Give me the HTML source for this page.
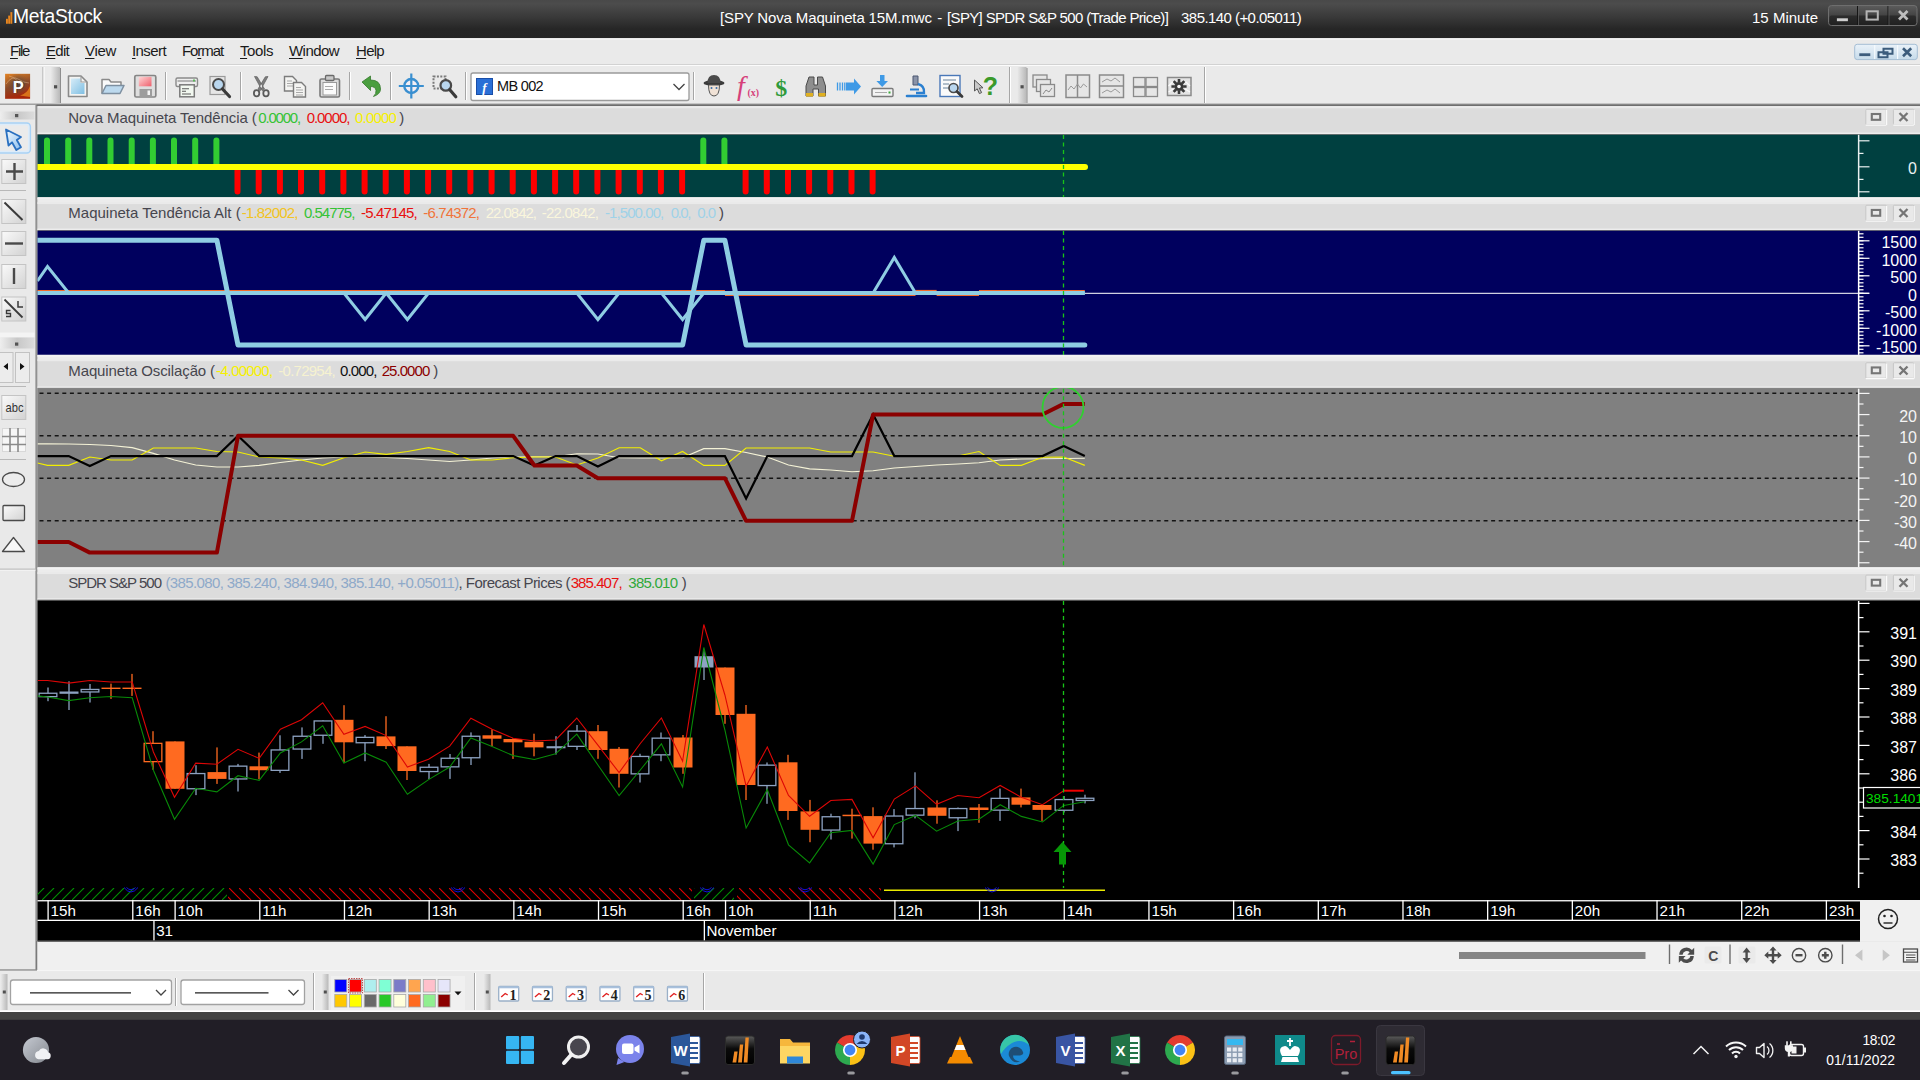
<!DOCTYPE html><html><head><meta charset="utf-8"><title>MetaStock</title><style>
html,body{margin:0;padding:0;background:#eaeaea;}
body{width:1920px;height:1080px;overflow:hidden;font-family:"Liberation Sans",sans-serif;}
#root{position:relative;width:1920px;height:1080px;overflow:hidden;background:#eaeaea;}
#gfx{position:absolute;left:0;top:0;}
.t{position:absolute;white-space:pre;line-height:1.2;font-family:"Liberation Sans",sans-serif;}
.t u{text-decoration:underline;text-underline-offset:2px;}
svg text{font-family:"Liberation Sans",sans-serif;}

</style></head><body>
<div id="root">
<svg id="gfx" width="1920" height="1080" viewBox="0 0 1920 1080">
<defs>
<clipPath id="cpC"><rect x="37.5" y="100" width="1890" height="850"/></clipPath>
<linearGradient id="gTitle" x1="0" y1="0" x2="0" y2="1">
 <stop offset="0" stop-color="#494949"/><stop offset="0.1" stop-color="#4c4c4c"/>
 <stop offset="0.45" stop-color="#393939"/><stop offset="0.76" stop-color="#262626"/><stop offset="1" stop-color="#252525"/>
</linearGradient>
<linearGradient id="gBtn" x1="0" y1="0" x2="1" y2="1">
 <stop offset="0" stop-color="#fafafa"/><stop offset="1" stop-color="#d2d2d2"/>
</linearGradient>
<linearGradient id="gGrip" x1="0" y1="0" x2="1" y2="0">
 <stop offset="0" stop-color="#e8e8e8"/><stop offset="1" stop-color="#b8b8b8"/>
</linearGradient>
<linearGradient id="gGripH" x1="0" y1="0" x2="1" y2="0">
 <stop offset="0" stop-color="#eeeeee"/><stop offset="0.5" stop-color="#c8c8c8"/><stop offset="1" stop-color="#dcdcdc"/>
</linearGradient>
<linearGradient id="gCap" x1="0" y1="0" x2="0" y2="1">
 <stop offset="0" stop-color="#5c5c5c"/><stop offset="1" stop-color="#2a2a2a"/>
</linearGradient>
<linearGradient id="gMs" x1="0" y1="0" x2="0" y2="1"><stop offset="0" stop-color="#5a5a5a"/><stop offset="0.45" stop-color="#0a0a0a"/><stop offset="1" stop-color="#000"/></linearGradient>
<linearGradient id="gP" x1="0" y1="0" x2="1" y2="1">
 <stop offset="0" stop-color="#d9762a"/><stop offset="0.5" stop-color="#8a3a18"/><stop offset="1" stop-color="#c2481c"/>
</linearGradient>
<linearGradient id="gDoc" x1="0" y1="0" x2="1" y2="1">
 <stop offset="0" stop-color="#d6ecf8"/><stop offset="1" stop-color="#7fbfe3"/>
</linearGradient>
<pattern id="hG" width="10" height="12" patternUnits="userSpaceOnUse" x="32" y="888">
 <path d="M0,12 L12,0 M-10,12 L2,0" stroke="#009000" stroke-width="1.2" fill="none"/>
</pattern>
<pattern id="hR" width="10" height="12" patternUnits="userSpaceOnUse" x="229" y="888">
 <path d="M0,0 L12,12 M-10,0 L2,12" stroke="#e00000" stroke-width="1.2" fill="none"/>
</pattern>
</defs>
<rect x="0" y="0" width="1920" height="38.2" fill="url(#gTitle)" />
<rect x="6" y="18.8" width="1.9" height="4.95" fill="#e8861f" />
<rect x="8.2" y="15.6" width="1.9" height="8.15" fill="#e8861f" />
<rect x="10.4" y="12.1" width="1.9" height="11.65" fill="#e8861f" />
<rect x="1828.5" y="5.500" width="88.500" height="20" rx="3" fill="url(#gCap)" stroke="#6e6e6e" stroke-width="1"/>
<rect x="1829.5" y="15.500" width="86.500" height="9.500" rx="2" fill="#1a1a1a" opacity=".55"/>
<path d="M1857.500,6 v19 M1888,6 v19" stroke="#161616" stroke-width="1"/><path d="M1858.500,6 v19 M1889,6 v19" stroke="#5a5a5a" stroke-width="0.800"/>
<rect x="1836.9" y="18.3" width="11" height="2.9" fill="#cfcfcf" />
<rect x="1866.600" y="11.300" width="11.200" height="8.300" fill="none" stroke="#b4b4b4" stroke-width="2"/>
<path d="M1899,11 l8.500,8.500 M1907.500,11 l-8.500,8.500" stroke="#bdbdbd" stroke-width="2.800" fill="none"/>
<rect x="0" y="38.2" width="1920" height="1.6" fill="#f6f6f6" />
<rect x="0" y="39.8" width="1920" height="25" fill="#eaeaea" />
<linearGradient id="gMdi" x1="0" y1="0" x2="0" y2="1"><stop offset="0" stop-color="#eaf2f9"/><stop offset="1" stop-color="#c6dbea"/></linearGradient>
<rect x="1854.700" y="44.300" width="62.600" height="15.300" rx="2.500" fill="url(#gMdi)" stroke="#a4bdd4" stroke-width="1"/>
<path d="M1874.700,45 v14 M1897.600,45 v14" stroke="#f6fafd" stroke-width="1.200"/>
<rect x="1859.3" y="53.3" width="11" height="2.8" fill="#3c5c7c" />
<path d="M1883.500,48.800 h9 v5 h-9z M1878.500,52.300 h9 v5 h-9z" fill="#d6e6f2" stroke="#3c5c7c" stroke-width="2"/>
<path d="M1903,48.200 l8.200,8 M1911.200,48.200 l-8.200,8" stroke="#3c5c7c" stroke-width="2.600"/>
<rect x="0" y="105" width="36" height="865" fill="#e9e9e9" />
<rect x="35.5" y="105" width="2" height="865" fill="#7a7a7a" />
<rect x="36.5" y="105" width="1" height="836" fill="#a8a8a8" />
<rect x="0" y="568.7" width="35.5" height="1" fill="#a8a8a8" />
<rect x="0" y="569.7" width="35.5" height="1" fill="#f6f6f6" />
<rect x="0" y="111.5" width="34.5" height="8" fill="url(#gGripH)" />
<rect x="15" y="114" width="3.3" height="3.2" fill="#555" />
<rect x="0" y="332.5" width="34.5" height="5" fill="#f4f4f4" />
<rect x="0" y="337.5" width="34.5" height="11" fill="url(#gGripH)" />
<rect x="15" y="342.5" width="3.3" height="3.2" fill="#555" />
<rect x="-3" y="123" width="33.300" height="30" rx="3.500" fill="#ebebeb" stroke="#a6d2f7" stroke-width="1.600"/>
<rect x="-3" y="124.600" width="31.700" height="26.800" rx="2.500" fill="none" stroke="#dcecfa" stroke-width="1.400"/>
<linearGradient id="gPtr" x1="0" y1="0" x2="1" y2="1"><stop offset="0" stop-color="#f4faff"/><stop offset="1" stop-color="#8ec0ee"/></linearGradient>
<path d="M6,129.500 L8.500,145.500 L12,142.300 L16.300,150 L21,147.300 L16.800,140 L21,137 Z" fill="url(#gPtr)" stroke="#2a70c0" stroke-width="1.800" stroke-linejoin="round"/>
<rect x="1.8" y="159.5" width="24" height="24" fill="url(#gBtn)" stroke="#c4c4c4" stroke-width="1"/>
<path d="M6,171.500 h17 M14.500,163 v17" stroke="#4a4a4a" stroke-width="2.4"/>
<rect x="0" y="190" width="26" height="1" fill="#b8b8b8" />
<rect x="1.8" y="199.5" width="24" height="24" fill="url(#gBtn)" stroke="#c4c4c4" stroke-width="1"/>
<path d="M4.500,202.500 L22.500,220" stroke="#3a3a3a" stroke-width="2"/>
<rect x="1.8" y="231.5" width="24" height="24" fill="url(#gBtn)" stroke="#c4c4c4" stroke-width="1"/>
<path d="M5,243.500 h18" stroke="#4a4a4a" stroke-width="2.4"/>
<rect x="1.8" y="264.5" width="24" height="24" fill="url(#gBtn)" stroke="#c4c4c4" stroke-width="1"/>
<path d="M14,268 v16" stroke="#4a4a4a" stroke-width="2.4"/>
<rect x="1.8" y="297" width="24" height="24" fill="url(#gBtn)" stroke="#c4c4c4" stroke-width="1"/>
<path d="M4.5,299.5 L22.5,317.5" stroke="#3a3a3a" stroke-width="1.8"/>
<path d="M18,301 v6 h5" stroke="#3a3a3a" stroke-width="1.5" fill="none"/>
<path d="M10.500,310.500 h-4 v3 h4 v3 h-4.500" stroke="#3a3a3a" stroke-width="1.4" fill="none"/>
<rect x="-1" y="352.500" width="14" height="30" fill="#ececec" stroke="#c2c2c2"/>
<rect x="15.500" y="352.500" width="14" height="30" fill="#ececec" stroke="#c2c2c2"/>
<path d="M8,363 v7 l-4.500,-3.500z M20,363 v7 l4.500,-3.500z" fill="#111"/>
<rect x="0" y="386" width="26" height="1" fill="#b8b8b8" />
<rect x="1.8" y="395.5" width="24" height="24" fill="url(#gBtn)" stroke="#c4c4c4" stroke-width="1"/>
<text x="14.500" y="412" font-size="13.5" text-anchor="middle" fill="#333" textLength="18" lengthAdjust="spacingAndGlyphs">abc</text>
<rect x="2.500" y="428.500" width="23" height="23" fill="#f6f6f6" stroke="#d8d8d8"/>
<path d="M10,428 v24 M18,428 v24 M2,436.500 h24 M2,444.500 h24" stroke="#8a8a8a" stroke-width="1.6"/>
<rect x="0" y="459" width="26" height="1" fill="#b8b8b8" />
<ellipse cx="13.500" cy="479.500" rx="11" ry="7" fill="#ececec" stroke="#4a4a4a" stroke-width="1.3"/>
<rect x="3" y="505.500" width="21.500" height="15" rx="1" fill="url(#gBtn)" stroke="#4a4a4a" stroke-width="1.3"/>
<path d="M13.500,537.500 L24.500,551.500 H2.500 Z" fill="#f8f8f8" stroke="#4a4a4a" stroke-width="1.3" stroke-linejoin="round"/>
<rect x="0" y="64" width="1920" height="1" fill="#d2d2d2" />
<rect x="0" y="65" width="1920" height="1" fill="#fbfbfb" />
<rect x="0" y="66" width="1920" height="38" fill="#eaeaea" />
<rect x="0" y="103.5" width="1920" height="1.5" fill="#a0a0a0" />
<linearGradient id="gP2" x1="0" y1="0" x2="0.3" y2="1"><stop offset="0" stop-color="#e38324"/><stop offset="0.55" stop-color="#8a4a28"/><stop offset="1" stop-color="#a8260a"/></linearGradient>
<radialGradient id="gP3" cx="0.5" cy="0.42" r="0.45"><stop offset="0" stop-color="#4a4038" stop-opacity=".95"/><stop offset="1" stop-color="#6a5040" stop-opacity="0"/></radialGradient>
<rect x="5.100" y="73.800" width="25" height="25" fill="url(#gP2)"/>
<path d="M30,86 q-3,8 -10,9.500 l10,1.500z" fill="#e0801c" opacity=".85"/>
<rect x="5.100" y="73.800" width="25" height="25" fill="url(#gP3)"/>
<path d="M6,84 q6,-9 12,-5 t11,4 M9,76 q8,2 10,8" stroke="#f0c8a0" stroke-width="0.900" fill="none" opacity=".45"/>
<text x="19" y="93.200" font-size="16.500" font-weight="bold" fill="#2a2420" text-anchor="middle" opacity=".8">P</text>
<text x="18.200" y="92.800" font-size="16.500" font-weight="bold" fill="#fbfbfb" text-anchor="middle">P</text>
<rect x="42.5" y="67" width="1" height="36" fill="#a6a6a6" />
<rect x="43.5" y="67" width="1" height="36" fill="#ffffff" />
<rect x="51" y="67" width="9" height="36" fill="url(#gGrip)"/>
<rect x="54" y="85.2" width="3.2" height="3.2" fill="#505050" />
<rect x="60" y="68" width="1" height="35" fill="#8e8e8e" />
<path d="M68.500,76 h12.500 l6,6 v14.500 h-18.500z" fill="#f4f4f2" stroke="#8a8a8a" stroke-width="1.600" stroke-linejoin="round"/>
<path d="M71,78.500 h9.500 v4.500 h4 v11 h-13.500z" fill="url(#gDoc)"/>
<path d="M81,76.500 v5.500 h5.500" fill="none" stroke="#9a9a9a" stroke-width="1.100"/>
<path d="M102,93.500 v-14 h7 l2,2.500 h10 v4" fill="#fafafa" stroke="#8a8a8a" stroke-width="1.5" stroke-linejoin="round"/>
<path d="M102,93.500 l4,-8 h18 l-4,8z" fill="#bcd9ee" stroke="#7d8fa0" stroke-width="1.5" stroke-linejoin="round"/>
<rect x="134.800" y="75.500" width="21" height="21.500" rx="1.500" fill="#dedede" stroke="#868686" stroke-width="1.700"/>
<linearGradient id="gPink" x1="0" y1="0" x2="1" y2="1"><stop offset="0" stop-color="#ffd6d6"/><stop offset="1" stop-color="#ee5f6c"/></linearGradient>
<rect x="138.800" y="76.800" width="12.700" height="9.500" fill="url(#gPink)"/>
<rect x="139.500" y="89" width="12.500" height="7.200" fill="#9c9c9c"/><rect x="147.500" y="90.500" width="2.500" height="4.500" fill="#f4f4f4"/>
<rect x="165" y="72" width="1" height="28" fill="#a6a6a6" />
<rect x="166" y="72" width="1" height="28" fill="#ffffff" />
<rect x="176" y="78" width="21.500" height="8.500" rx="1.500" fill="#eeeeee" stroke="#8a8a8a" stroke-width="1.400"/>
<path d="M177.500,81 h18.500" stroke="#b4b4b4" stroke-width="2"/>
<rect x="179.800" y="84.800" width="14.500" height="12" fill="#f2f8f0" stroke="#7a7a7a" stroke-width="1.500"/>
<path d="M182,88.700 h7 M182,91.300 h4 M182,94 h9" stroke="#5a5a5a" stroke-width="1.100"/>
<rect x="193" y="79.5" width="2" height="2" fill="#5ab85a" />
<rect x="210" y="76.500" width="15" height="18" fill="#e6e6e6" stroke="#9a9a9a" stroke-width="1.2"/>
<circle cx="218.500" cy="84.500" r="5.500" fill="#b9d6ee" stroke="#4a4a4a" stroke-width="2"/>
<path d="M222.500,89 l7,7.500" stroke="#3a3a3a" stroke-width="3.200" stroke-linecap="round"/>
<rect x="240" y="72" width="1" height="28" fill="#a6a6a6" />
<rect x="241" y="72" width="1" height="28" fill="#ffffff" />
<path d="M254.500,76.500 l2.700,0.300 l7.300,12.200 l-2.200,1.800z M268,76.500 l-2.700,0.300 l-7.300,12.200 l2.200,1.800z" fill="#7e7e7e" stroke="#5e5e5e" stroke-width="0.700"/>
<ellipse cx="256.600" cy="93.200" rx="2.700" ry="3.100" fill="none" stroke="#5a5a5a" stroke-width="1.800"/><ellipse cx="266" cy="93.200" rx="2.700" ry="3.100" fill="none" stroke="#5a5a5a" stroke-width="1.800"/>
<path d="M284.500,76.500 h8 l4,4 v10.500 h-12z" fill="#f4f4f2" stroke="#7c7c7c" stroke-width="1.400"/>
<path d="M287,81 h5 M287,83.500 h7 M287,86 h7" stroke="#a8a8a8" stroke-width="1"/>
<path d="M293.500,82.500 h8 l4,4 v10.500 h-12z" fill="#f4f4f2" stroke="#7c7c7c" stroke-width="1.400"/>
<path d="M296,87.500 h5 M296,90 h7 M296,92.500 h7 M296,95 h7" stroke="#a8a8a8" stroke-width="1"/>
<rect x="320" y="79" width="19.500" height="18" rx="1.500" fill="#dcdcdc" stroke="#7a7a7a" stroke-width="1.600"/>
<rect x="323" y="82.500" width="13.500" height="12.500" fill="#fbfbfb" stroke="#9a9a9a" stroke-width="1"/>
<rect x="325.500" y="75.500" width="8.500" height="5" rx="1" fill="#c8c8c8" stroke="#6a6a6a" stroke-width="1.300"/>
<path d="M325,86.500 h8 M325,89.500 h8" stroke="#aaa" stroke-width="1"/>
<rect x="349" y="72" width="1" height="28" fill="#a6a6a6" />
<rect x="350" y="72" width="1" height="28" fill="#ffffff" />
<path d="M362,82 l8.500,-6 v4 q10,0 10,9 q0,5 -7,7.500 q3,-3 2.500,-6 q-0.500,-4 -5.500,-4 v4z" fill="#4a9e3f" stroke="#357a2c" stroke-width="0.800" stroke-linejoin="round"/>
<rect x="390" y="72" width="1" height="28" fill="#a6a6a6" />
<rect x="391" y="72" width="1" height="28" fill="#ffffff" />
<circle cx="411.300" cy="86" r="7" fill="#f3eef4" stroke="#3a8fd0" stroke-width="2.400"/>
<path d="M411.300,73.500 v25 M398.800,86 h25" stroke="#3a8fd0" stroke-width="2.200"/>
<rect x="433.500" y="76.500" width="12" height="12" fill="none" stroke="#7a7a7a" stroke-width="2" stroke-dasharray="2 1.400"/>
<circle cx="445.800" cy="85.400" r="5.300" fill="#b9d6ee" stroke="#4a4a4a" stroke-width="2.200"/>
<path d="M449.800,89.800 l6,7" stroke="#3a3a3a" stroke-width="3.200" stroke-linecap="round"/>
<rect x="465" y="72" width="1" height="28" fill="#a6a6a6" />
<rect x="466" y="72" width="1" height="28" fill="#ffffff" />
<rect x="471" y="73" width="218" height="27.500" rx="2" fill="#ffffff" stroke="#9a9a9a" stroke-width="1.300"/>
<rect x="476.500" y="78.500" width="16" height="16" fill="#2a6fd6" stroke="#1a4ea8" stroke-width="1"/>
<text x="484.500" y="91.500" font-size="13" font-style="italic" font-weight="bold" style="font-family:&quot;Liberation Serif&quot;,serif" fill="#fff" text-anchor="middle">f</text>
<path d="M673.500,84 l5.500,5.500 l5.500,-5.500" stroke="#444" stroke-width="1.300" fill="none"/>
<rect x="693" y="72" width="1" height="28" fill="#a6a6a6" />
<rect x="694" y="72" width="1" height="28" fill="#ffffff" />
<ellipse cx="714" cy="83" rx="10.500" ry="3" fill="#3a3a3a"/>
<path d="M707.500,83 q0,-8 6.500,-8 q6.500,0 6.500,8z" fill="#4a4a4a"/>
<path d="M708.500,85 q0,11 5.500,11 q5.500,0 5.500,-11z" fill="#f0e2d6" stroke="#555" stroke-width="1"/>
<circle cx="711.500" cy="88" r="1" fill="#3a6ea8"/><circle cx="716.500" cy="88" r="1" fill="#3a6ea8"/>
<text x="737" y="94.500" font-size="28" font-style="italic" style="font-family:&quot;Liberation Serif&quot;,serif" fill="#d6407a">f</text>
<text x="747.500" y="95.500" font-size="10" font-weight="bold" style="font-family:&quot;Liberation Serif&quot;,serif" fill="#d6407a" textLength="11.500" lengthAdjust="spacingAndGlyphs">(x)</text>
<text x="781.300" y="95.500" font-size="24" font-weight="bold" style="font-family:&quot;Liberation Serif&quot;,serif" fill="#2f9a3a" text-anchor="middle">$</text>
<path d="M806,96 v-10 l3,-9 h5 v8 h3.500 v-8 h5 l3,9 v10 h-7 v-7 h-5.500 v7z" fill="#8e8e8e" stroke="#4a4a4a" stroke-width="1"/>
<rect x="806" y="93" width="7" height="3.500" fill="#e0b020"/><rect x="818.500" y="93" width="7" height="3.500" fill="#e0b020"/>
<path d="M846,82.500 h8 v-4 l7,8 l-7,8 v-4 h-8z" fill="#3f9ae6"/>
<path d="M837.500,82.500 v8 M840,82.500 v8 M842.500,82.500 v8 M844.800,82.500 v8" stroke="#3f9ae6" stroke-width="1.300"/>
<path d="M880,75 h4.500 v6 h3.500 l-5.800,6 l-5.800,-6 h3.600z" fill="#3f9ae6"/>
<rect x="872" y="88.500" width="21" height="8" rx="1" fill="#f4f4f4" stroke="#7a7a7a" stroke-width="1.400"/>
<path d="M875,92.500 h12" stroke="#aaa" stroke-width="1"/>
<rect x="888.5" y="91.5" width="2" height="2" fill="#39a839" />
<path d="M913,76 h5 v9 h-5z" fill="#8a93a8" stroke="#4a5670" stroke-width="1"/>
<path d="M918,84 q7,2 6,9 h-8" fill="none" stroke="#2a7fd0" stroke-width="2.400"/>
<path d="M907,96 h19" stroke="#2a7fd0" stroke-width="2.600" stroke-linecap="round"/>
<path d="M910,89.500 h9" stroke="#2a7fd0" stroke-width="2"/>
<rect x="940" y="75.500" width="20" height="21" fill="#fafafa" stroke="#4a78b8" stroke-width="1.400"/>
<path d="M943,80 h13 M943,84 h6 M943,88 h6" stroke="#9ab" stroke-width="1.500"/>
<circle cx="953.500" cy="88" r="4.500" fill="#b9d6ee" stroke="#4a4a4a" stroke-width="1.700"/>
<path d="M957,91.500 l5,5" stroke="#3a3a3a" stroke-width="2.800" stroke-linecap="round"/>
<path d="M974.500,80 l0,11 l2.700,-2.200 l2.200,4.800 l2.200,-1 l-2.200,-4.600 l3.600,-0.200z" fill="#c8c8c8" stroke="#555" stroke-width="1"/>
<text x="990.500" y="95" font-size="25" font-weight="bold" fill="#3a9a2a" text-anchor="middle">?</text>
<rect x="1009" y="67" width="1" height="36" fill="#a6a6a6" />
<rect x="1010" y="67" width="1" height="36" fill="#ffffff" />
<rect x="1017.5" y="67" width="9" height="36" fill="url(#gGrip)"/>
<rect x="1020.5" y="85.2" width="3.2" height="3.2" fill="#505050" />
<rect x="1026.5" y="68" width="1" height="35" fill="#8e8e8e" />
<rect x="1033" y="75" width="14" height="12" fill="#e6e6e6" stroke="#8a8a8a" stroke-width="1.300"/>
<rect x="1036.5" y="79.5" width="14" height="12" fill="#e6e6e6" stroke="#8a8a8a" stroke-width="1.300"/>
<rect x="1040.5" y="84.5" width="14" height="12" fill="#e6e6e6" stroke="#8a8a8a" stroke-width="1.300"/>
<path d="M1043,94 l3,-4 l3,2 l3,-4" stroke="#8a8a8a" stroke-width="1" fill="none"/>
<rect x="1066" y="75" width="23.500" height="22.500" fill="#e6e6e6" stroke="#8a8a8a" stroke-width="1.500"/>
<path d="M1077.500,75 v22.500" stroke="#8a8a8a" stroke-width="1.500"/>
<path d="M1068,90 l3,-4 l3,3 l3.500,-5 l3,4 l3,-4 l3.500,3" stroke="#9a9a9a" stroke-width="1" fill="none"/>
<rect x="1099.500" y="75" width="24" height="22.500" fill="#e6e6e6" stroke="#8a8a8a" stroke-width="1.500"/>
<path d="M1099.500,86 h24" stroke="#8a8a8a" stroke-width="1.500"/>
<path d="M1102,82 l5,-3 l4,2 l4,-3 l5,4 M1102,93 l5,-3 l4,2 l4,-3 l5,4" stroke="#9a9a9a" stroke-width="1" fill="none"/>
<rect x="1133.5" y="77.5" width="11.500" height="9" fill="#e6e6e6" stroke="#8a8a8a" stroke-width="1.300"/>
<rect x="1146" y="77.5" width="11.500" height="9" fill="#e6e6e6" stroke="#8a8a8a" stroke-width="1.300"/>
<rect x="1133.5" y="87.5" width="11.500" height="9" fill="#e6e6e6" stroke="#8a8a8a" stroke-width="1.300"/>
<rect x="1146" y="87.5" width="11.500" height="9" fill="#e6e6e6" stroke="#8a8a8a" stroke-width="1.300"/>
<rect x="1167.500" y="77.500" width="23.500" height="18" fill="#e4e4e4" stroke="#8a8a8a" stroke-width="1.500"/>
<path d="M1168.500,86 l4,-4 l3,2 M1190,86 l-4,-4 l-3,2 M1168.500,92 l5,-3 M1190,92 l-5,-3" stroke="#fafafa" stroke-width="1.200" fill="none"/>
<path d="M1183.20,86.50 L1186.60,86.50 M1181.97,89.47 L1184.37,91.87 M1179.00,90.70 L1179.00,94.10 M1176.03,89.47 L1173.63,91.87 M1174.80,86.50 L1171.40,86.50 M1176.03,83.53 L1173.63,81.13 M1179.00,82.30 L1179.00,78.90 M1181.97,83.53 L1184.37,81.13" stroke="#3a3a3a" stroke-width="2.600"/>
<circle cx="1179" cy="86.500" r="4.600" fill="#3a3a3a"/><circle cx="1179" cy="86.500" r="1.800" fill="#f6f6f6"/>
<rect x="1204" y="67" width="1" height="36" fill="#a6a6a6" />
<rect x="1205" y="67" width="1" height="36" fill="#ffffff" />
<rect x="36.5" y="104.5" width="1883.5" height="1.6" fill="#6e6e6e" />
<rect x="37.5" y="106.2" width="1882.5" height="2" fill="#eaeaea" />
<rect x="37.5" y="108.2" width="1882.5" height="26.6" fill="#dcdcdc" />
<rect x="37.5" y="132.6" width="1882.5" height="1.4" fill="#ededed" />
<rect x="37.5" y="134" width="1882.5" height="0.8" fill="#5e5e5e" />
<rect x="1865.8" y="109.3" width="20.5" height="15.5" rx="1" fill="#e9e9e9" stroke="#c6c6c6" stroke-width="1"/>
<path d="M1865.8,125.2 h20.5 M1886.6,110 v15" stroke="#fafafa" stroke-width="1.2" fill="none"/>
<rect x="1893.4" y="109.3" width="20.5" height="15.5" rx="1" fill="#e9e9e9" stroke="#c6c6c6" stroke-width="1"/>
<path d="M1893.4,125.2 h20.5 M1914.2,110 v15" stroke="#fafafa" stroke-width="1.2" fill="none"/>
<rect x="1871.8" y="114" width="8.4" height="5.8" fill="none" stroke="#757575" stroke-width="2.1"/>
<path d="M1899.5,113 l8,8 M1907.5,113 l-8,8" stroke="#757575" stroke-width="2.3"/>
<rect x="37.5" y="134.8" width="1882.5" height="62.6" fill="#004040" />
<path d="M44.0,164 v-23.5 a3,3 0 0 1 6,0 v23.5z" fill="#32cd32"/>
<path d="M65.2,164 v-23.5 a3,3 0 0 1 6,0 v23.5z" fill="#32cd32"/>
<path d="M86.3,164 v-23.5 a3,3 0 0 1 6,0 v23.5z" fill="#32cd32"/>
<path d="M107.5,164 v-23.5 a3,3 0 0 1 6,0 v23.5z" fill="#32cd32"/>
<path d="M128.7,164 v-23.5 a3,3 0 0 1 6,0 v23.5z" fill="#32cd32"/>
<path d="M149.9,164 v-23.5 a3,3 0 0 1 6,0 v23.5z" fill="#32cd32"/>
<path d="M171.0,164 v-23.5 a3,3 0 0 1 6,0 v23.5z" fill="#32cd32"/>
<path d="M192.2,164 v-23.5 a3,3 0 0 1 6,0 v23.5z" fill="#32cd32"/>
<path d="M213.4,164 v-23.5 a3,3 0 0 1 6,0 v23.5z" fill="#32cd32"/>
<path d="M700.3,164 v-23.5 a3,3 0 0 1 6,0 v23.5z" fill="#32cd32"/>
<path d="M721.4,164 v-23.5 a3,3 0 0 1 6,0 v23.5z" fill="#32cd32"/>
<path d="M234.5,170 v21.500 a3,3 0 0 0 6,0 v-21.500z" fill="#ff0000"/>
<path d="M255.7,170 v21.500 a3,3 0 0 0 6,0 v-21.500z" fill="#ff0000"/>
<path d="M276.9,170 v21.500 a3,3 0 0 0 6,0 v-21.500z" fill="#ff0000"/>
<path d="M298.0,170 v21.500 a3,3 0 0 0 6,0 v-21.500z" fill="#ff0000"/>
<path d="M319.2,170 v21.500 a3,3 0 0 0 6,0 v-21.500z" fill="#ff0000"/>
<path d="M340.4,170 v21.500 a3,3 0 0 0 6,0 v-21.500z" fill="#ff0000"/>
<path d="M361.6,170 v21.500 a3,3 0 0 0 6,0 v-21.500z" fill="#ff0000"/>
<path d="M382.7,170 v21.500 a3,3 0 0 0 6,0 v-21.500z" fill="#ff0000"/>
<path d="M403.9,170 v21.500 a3,3 0 0 0 6,0 v-21.500z" fill="#ff0000"/>
<path d="M425.1,170 v21.500 a3,3 0 0 0 6,0 v-21.500z" fill="#ff0000"/>
<path d="M446.2,170 v21.500 a3,3 0 0 0 6,0 v-21.500z" fill="#ff0000"/>
<path d="M467.4,170 v21.500 a3,3 0 0 0 6,0 v-21.500z" fill="#ff0000"/>
<path d="M488.6,170 v21.500 a3,3 0 0 0 6,0 v-21.500z" fill="#ff0000"/>
<path d="M509.7,170 v21.500 a3,3 0 0 0 6,0 v-21.500z" fill="#ff0000"/>
<path d="M530.9,170 v21.500 a3,3 0 0 0 6,0 v-21.500z" fill="#ff0000"/>
<path d="M552.1,170 v21.500 a3,3 0 0 0 6,0 v-21.500z" fill="#ff0000"/>
<path d="M573.2,170 v21.500 a3,3 0 0 0 6,0 v-21.500z" fill="#ff0000"/>
<path d="M594.4,170 v21.500 a3,3 0 0 0 6,0 v-21.500z" fill="#ff0000"/>
<path d="M615.6,170 v21.500 a3,3 0 0 0 6,0 v-21.500z" fill="#ff0000"/>
<path d="M636.8,170 v21.500 a3,3 0 0 0 6,0 v-21.500z" fill="#ff0000"/>
<path d="M657.9,170 v21.500 a3,3 0 0 0 6,0 v-21.500z" fill="#ff0000"/>
<path d="M679.1,170 v21.500 a3,3 0 0 0 6,0 v-21.500z" fill="#ff0000"/>
<path d="M742.6,170 v21.500 a3,3 0 0 0 6,0 v-21.500z" fill="#ff0000"/>
<path d="M763.8,170 v21.500 a3,3 0 0 0 6,0 v-21.500z" fill="#ff0000"/>
<path d="M785.0,170 v21.500 a3,3 0 0 0 6,0 v-21.500z" fill="#ff0000"/>
<path d="M806.1,170 v21.500 a3,3 0 0 0 6,0 v-21.500z" fill="#ff0000"/>
<path d="M827.3,170 v21.500 a3,3 0 0 0 6,0 v-21.500z" fill="#ff0000"/>
<path d="M848.5,170 v21.500 a3,3 0 0 0 6,0 v-21.500z" fill="#ff0000"/>
<path d="M869.6,170 v21.500 a3,3 0 0 0 6,0 v-21.500z" fill="#ff0000"/>
<rect x="37.5" y="164" width="1047.5" height="6" fill="#ffff00" />
<circle cx="1085" cy="167" r="3" fill="#ffff00"/>
<line x1="1063.5" y1="135" x2="1063.5" y2="197.4" stroke="#17c417" stroke-width="1.3" stroke-dasharray="4 3.5"/>
<rect x="1857.9" y="134.8" width="1.5" height="62.6" fill="#e8f0f0" />
<rect x="1859" y="140.2" width="10.5" height="1.2" fill="#e8f0f0" />
<rect x="1859" y="166.2" width="10.5" height="1.2" fill="#e8f0f0" />
<rect x="1859" y="191.2" width="10.5" height="1.2" fill="#e8f0f0" />
<rect x="1859" y="152.8" width="4.5" height="1.2" fill="#e8f0f0" />
<rect x="1859" y="178.8" width="4.5" height="1.2" fill="#e8f0f0" />
<text x="1917" y="173.76" font-size="16" fill="#e8f0f0" text-anchor="end">0</text>
<rect x="37.5" y="197.4" width="1882.5" height="6.7" fill="#ececec" />
<rect x="37.5" y="197.4" width="1882.5" height="2" fill="#f2f2f2" />
<rect x="37.5" y="202.1" width="1882.5" height="2" fill="#eaeaea" />
<rect x="37.5" y="204.1" width="1882.5" height="26.7" fill="#dcdcdc" />
<rect x="37.5" y="228.6" width="1882.5" height="1.4" fill="#ededed" />
<rect x="37.5" y="230" width="1882.5" height="0.8" fill="#5e5e5e" />
<rect x="1865.8" y="205.25" width="20.5" height="15.5" rx="1" fill="#e9e9e9" stroke="#c6c6c6" stroke-width="1"/>
<path d="M1865.8,221.15 h20.5 M1886.6,205.95 v15" stroke="#fafafa" stroke-width="1.2" fill="none"/>
<rect x="1893.4" y="205.25" width="20.5" height="15.5" rx="1" fill="#e9e9e9" stroke="#c6c6c6" stroke-width="1"/>
<path d="M1893.4,221.15 h20.5 M1914.2,205.95 v15" stroke="#fafafa" stroke-width="1.2" fill="none"/>
<rect x="1871.8" y="209.95" width="8.4" height="5.8" fill="none" stroke="#757575" stroke-width="2.1"/>
<path d="M1899.5,208.95 l8,8 M1907.5,208.95 l-8,8" stroke="#757575" stroke-width="2.3"/>
<rect x="37.5" y="230.8" width="1882.5" height="124.1" fill="#00005e" />
<line x1="1085" y1="293.3" x2="1869" y2="293.3" stroke="#d0d0e0" stroke-width="1.2" />
<line x1="37.5" y1="290.5" x2="724.94" y2="290.5" stroke="#f26a2a" stroke-width="1.2" />
<line x1="724.94" y1="295.5" x2="915.47" y2="295.5" stroke="#f26a2a" stroke-width="1.2" />
<line x1="915.47" y1="290.5" x2="936.64" y2="290.5" stroke="#f26a2a" stroke-width="1.2" />
<line x1="936.64" y1="295.5" x2="978.98" y2="295.5" stroke="#f26a2a" stroke-width="1.2" />
<line x1="978.98" y1="290.5" x2="1084.83" y2="290.5" stroke="#f26a2a" stroke-width="1.2" />
<polyline points="37.5,281.0 47.5,266.5 68.7,293.0 89.8,293.0 111.0,293.0 132.2,293.0 153.4,293.0 174.5,293.0 195.7,293.0 216.9,293.0 238.0,293.0 259.2,293.0 280.4,293.0 301.5,293.0 322.7,293.0 343.9,293.0 365.1,319.5 386.2,293.0 407.4,319.5 428.6,293.0 449.7,293.0 470.9,293.0 492.1,293.0 513.2,293.0 534.4,293.0 555.6,293.0 576.8,293.0 597.9,319.5 619.1,293.0 640.3,293.0 661.4,293.0 682.6,319.5 703.8,293.0 724.9,293.0 746.1,293.0 767.3,293.0 788.5,293.0 809.6,293.0 830.8,293.0 852.0,293.0 873.1,293.0 894.3,257.5 915.5,293.0 936.6,293.0 957.8,293.0 979.0,293.0 1000.2,293.0 1021.3,293.0 1042.5,293.0 1063.7,293.0 1084.8,293.0" fill="none" stroke="#8fcde3" stroke-width="3" clip-path="url(#cpC)" stroke-linejoin="miter"/>
<rect x="37.5" y="291" width="1047.33" height="4" fill="#8fcde3" />
<polyline points="37.5,240.3 216.9,240.3 238.0,345.0 682.6,345.0 703.8,240.3 724.9,240.3 746.1,345.0 1084.8,345.0" fill="none" stroke="#8fcde3" stroke-width="5" clip-path="url(#cpC)" stroke-linejoin="round" stroke-linecap="round"/>
<line x1="1063.5" y1="231" x2="1063.5" y2="354.9" stroke="#17c417" stroke-width="1.3" stroke-dasharray="4 3.5"/>
<rect x="1857.9" y="230.8" width="1.5" height="124.1" fill="#ffffff" />
<rect x="1859" y="240.2" width="10.5" height="1.2" fill="#ffffff" />
<rect x="1859" y="257.7" width="10.5" height="1.2" fill="#ffffff" />
<rect x="1859" y="275.2" width="10.5" height="1.2" fill="#ffffff" />
<rect x="1859" y="292.7" width="10.5" height="1.2" fill="#ffffff" />
<rect x="1859" y="310.2" width="10.5" height="1.2" fill="#ffffff" />
<rect x="1859" y="327.7" width="10.5" height="1.2" fill="#ffffff" />
<rect x="1859" y="345.2" width="10.5" height="1.2" fill="#ffffff" />
<rect x="1859" y="233.2" width="4.5" height="1.2" fill="#ffffff" />
<rect x="1859" y="236.7" width="4.5" height="1.2" fill="#ffffff" />
<rect x="1859" y="240.2" width="4.5" height="1.2" fill="#ffffff" />
<rect x="1859" y="243.7" width="4.5" height="1.2" fill="#ffffff" />
<rect x="1859" y="247.2" width="4.5" height="1.2" fill="#ffffff" />
<rect x="1859" y="250.7" width="4.5" height="1.2" fill="#ffffff" />
<rect x="1859" y="254.2" width="4.5" height="1.2" fill="#ffffff" />
<rect x="1859" y="257.7" width="4.5" height="1.2" fill="#ffffff" />
<rect x="1859" y="261.2" width="4.5" height="1.2" fill="#ffffff" />
<rect x="1859" y="264.7" width="4.5" height="1.2" fill="#ffffff" />
<rect x="1859" y="268.2" width="4.5" height="1.2" fill="#ffffff" />
<rect x="1859" y="271.7" width="4.5" height="1.2" fill="#ffffff" />
<rect x="1859" y="275.2" width="4.5" height="1.2" fill="#ffffff" />
<rect x="1859" y="278.7" width="4.5" height="1.2" fill="#ffffff" />
<rect x="1859" y="282.2" width="4.5" height="1.2" fill="#ffffff" />
<rect x="1859" y="285.7" width="4.5" height="1.2" fill="#ffffff" />
<rect x="1859" y="289.2" width="4.5" height="1.2" fill="#ffffff" />
<rect x="1859" y="292.7" width="4.5" height="1.2" fill="#ffffff" />
<rect x="1859" y="296.2" width="4.5" height="1.2" fill="#ffffff" />
<rect x="1859" y="299.7" width="4.5" height="1.2" fill="#ffffff" />
<rect x="1859" y="303.2" width="4.5" height="1.2" fill="#ffffff" />
<rect x="1859" y="306.7" width="4.5" height="1.2" fill="#ffffff" />
<rect x="1859" y="310.2" width="4.5" height="1.2" fill="#ffffff" />
<rect x="1859" y="313.7" width="4.5" height="1.2" fill="#ffffff" />
<rect x="1859" y="317.2" width="4.5" height="1.2" fill="#ffffff" />
<rect x="1859" y="320.7" width="4.5" height="1.2" fill="#ffffff" />
<rect x="1859" y="324.2" width="4.5" height="1.2" fill="#ffffff" />
<rect x="1859" y="327.7" width="4.5" height="1.2" fill="#ffffff" />
<rect x="1859" y="331.2" width="4.5" height="1.2" fill="#ffffff" />
<rect x="1859" y="334.7" width="4.5" height="1.2" fill="#ffffff" />
<rect x="1859" y="338.2" width="4.5" height="1.2" fill="#ffffff" />
<rect x="1859" y="341.7" width="4.5" height="1.2" fill="#ffffff" />
<rect x="1859" y="345.2" width="4.5" height="1.2" fill="#ffffff" />
<rect x="1859" y="348.7" width="4.5" height="1.2" fill="#ffffff" />
<rect x="1859" y="352.2" width="4.5" height="1.2" fill="#ffffff" />
<text x="1917" y="248.06" font-size="16" fill="#ffffff" text-anchor="end">1500</text>
<text x="1917" y="265.56" font-size="16" fill="#ffffff" text-anchor="end">1000</text>
<text x="1917" y="283.06" font-size="16" fill="#ffffff" text-anchor="end">500</text>
<text x="1917" y="300.56" font-size="16" fill="#ffffff" text-anchor="end">0</text>
<text x="1917" y="318.06" font-size="16" fill="#ffffff" text-anchor="end">-500</text>
<text x="1917" y="335.56" font-size="16" fill="#ffffff" text-anchor="end">-1000</text>
<text x="1917" y="353.06" font-size="16" fill="#ffffff" text-anchor="end">-1500</text>
<rect x="37.5" y="354.9" width="1882.5" height="6.3" fill="#ececec" />
<rect x="37.5" y="354.9" width="1882.5" height="2" fill="#f2f2f2" />
<rect x="37.5" y="359.2" width="1882.5" height="2" fill="#eaeaea" />
<rect x="37.5" y="361.2" width="1882.5" height="27.5" fill="#dcdcdc" />
<rect x="37.5" y="386.5" width="1882.5" height="1.4" fill="#ededed" />
<rect x="37.5" y="387.9" width="1882.5" height="0.8" fill="#5e5e5e" />
<rect x="1865.8" y="362.75" width="20.5" height="15.5" rx="1" fill="#e9e9e9" stroke="#c6c6c6" stroke-width="1"/>
<path d="M1865.8,378.65 h20.5 M1886.6,363.45 v15" stroke="#fafafa" stroke-width="1.2" fill="none"/>
<rect x="1893.4" y="362.75" width="20.5" height="15.5" rx="1" fill="#e9e9e9" stroke="#c6c6c6" stroke-width="1"/>
<path d="M1893.4,378.65 h20.5 M1914.2,363.45 v15" stroke="#fafafa" stroke-width="1.2" fill="none"/>
<rect x="1871.8" y="367.45" width="8.4" height="5.8" fill="none" stroke="#757575" stroke-width="2.1"/>
<path d="M1899.5,366.45 l8,8 M1907.5,366.45 l-8,8" stroke="#757575" stroke-width="2.3"/>
<rect x="37.5" y="388.7" width="1882.5" height="178.7" fill="#808080" />
<line x1="39.5" y1="393.25" x2="1859" y2="393.25" stroke="#141414" stroke-width="1.4" stroke-dasharray="4 3.6"/>
<line x1="39.5" y1="435.75" x2="1859" y2="435.75" stroke="#141414" stroke-width="1.4" stroke-dasharray="4 3.6"/>
<line x1="39.5" y1="478.25" x2="1859" y2="478.25" stroke="#141414" stroke-width="1.4" stroke-dasharray="4 3.6"/>
<line x1="39.5" y1="520.75" x2="1859" y2="520.75" stroke="#141414" stroke-width="1.4" stroke-dasharray="4 3.6"/>
<polyline points="37.5,443.8 47.5,443.8 68.7,444.0 89.8,444.5 111.0,445.5 132.2,447.6 153.4,453.4 174.5,460.0 195.7,465.0 216.9,467.0 238.0,467.0 259.2,465.4 280.4,462.5 301.5,460.0 322.7,458.0 343.9,457.0 365.1,457.0 386.2,457.5 407.4,458.5 428.6,460.0 449.7,461.5 470.9,460.0 492.1,458.0 513.2,457.0 534.4,456.7 555.6,456.7 576.8,453.8 597.9,454.0 619.1,457.7 640.3,458.0 661.4,458.0 682.6,457.7 703.8,448.6 724.9,448.6 746.1,452.5 767.3,457.0 788.5,465.0 809.6,468.9 830.8,470.0 852.0,471.7 873.1,470.8 894.3,468.0 915.5,466.5 936.6,465.0 957.8,464.0 979.0,462.7 1000.2,460.0 1021.3,459.0 1042.5,458.8 1063.7,458.5 1084.8,458.2" fill="none" stroke="#f4f2d6" stroke-width="1.15" clip-path="url(#cpC)" />
<polyline points="37.5,463.0 47.5,465.4 68.7,465.4 89.8,457.0 111.0,460.0 132.2,460.0 153.4,448.0 174.5,448.0 195.7,448.0 216.9,451.5 238.0,452.0 259.2,457.0 280.4,458.0 301.5,460.0 322.7,465.4 343.9,457.7 365.1,452.0 386.2,454.4 407.4,451.5 428.6,447.7 449.7,451.5 470.9,460.0 492.1,460.0 513.2,457.7 534.4,457.0 555.6,457.0 576.8,465.0 597.9,458.0 619.1,447.7 640.3,447.7 661.4,460.8 682.6,451.5 703.8,465.4 724.9,465.4 746.1,448.0 767.3,448.0 788.5,448.0 809.6,448.0 830.8,452.0 852.0,452.0 873.1,452.0 894.3,456.2 915.5,456.2 936.6,456.2 957.8,456.0 979.0,451.5 1000.2,465.4 1021.3,465.4 1042.5,457.3 1063.7,457.0 1084.8,465.4" fill="none" stroke="#f2ee00" stroke-width="1.15" clip-path="url(#cpC)" />
<polyline points="37.5,456.1 47.5,456.1 68.7,456.1 89.8,466.1 111.0,456.1 132.2,456.1 153.4,456.1 174.5,456.1 195.7,456.1 216.9,456.1 238.0,435.8 259.2,456.1 280.4,456.1 301.5,456.1 322.7,456.1 343.9,456.1 365.1,456.1 386.2,456.1 407.4,456.1 428.6,456.1 449.7,456.1 470.9,456.1 492.1,456.1 513.2,456.1 534.4,465.5 555.6,456.1 576.8,456.1 597.9,466.6 619.1,456.1 640.3,456.1 661.4,456.1 682.6,456.1 703.8,456.1 724.9,456.1 746.1,498.6 767.3,456.1 788.5,456.1 809.6,456.1 830.8,456.1 852.0,456.1 873.1,414.5 894.3,456.1 915.5,456.1 936.6,456.1 957.8,456.1 979.0,456.1 1000.2,456.1 1021.3,456.1 1042.5,456.1 1063.7,445.9 1084.8,456.1" fill="none" stroke="#000000" stroke-width="2.2" clip-path="url(#cpC)" stroke-linejoin="miter"/>
<polyline points="37.5,542.0 47.5,542.0 68.7,542.0 89.8,552.6 111.0,552.6 132.2,552.6 153.4,552.6 174.5,552.6 195.7,552.6 216.9,552.6 238.0,435.8 259.2,435.8 280.4,435.8 301.5,435.8 322.7,435.8 343.9,435.8 365.1,435.8 386.2,435.8 407.4,435.8 428.6,435.8 449.7,435.8 470.9,435.8 492.1,435.8 513.2,435.8 534.4,465.5 555.6,465.5 576.8,465.5 597.9,478.2 619.1,478.2 640.3,478.2 661.4,478.2 682.6,478.2 703.8,478.2 724.9,478.2 746.1,520.8 767.3,520.8 788.5,520.8 809.6,520.8 830.8,520.8 852.0,520.8 873.1,414.5 894.3,414.5 915.5,414.5 936.6,414.5 957.8,414.5 979.0,414.5 1000.2,414.5 1021.3,414.5 1042.5,414.5 1063.7,403.9 1084.8,403.9" fill="none" stroke="#8b0000" stroke-width="4" clip-path="url(#cpC)" stroke-linejoin="round"/>
<clipPath id="cp3"><rect x="37.5" y="388" width="1900" height="180"/></clipPath>
<circle cx="1063" cy="407.3" r="20.5" fill="none" stroke="#2fd02f" stroke-width="1.8" clip-path="url(#cp3)"/>
<line x1="1063.5" y1="388.7" x2="1063.5" y2="567.4" stroke="#17c417" stroke-width="1.3" stroke-dasharray="4 3.5"/>
<rect x="1857.9" y="388.7" width="1.5" height="178.7" fill="#f4f4f4" />
<rect x="1859" y="392.8" width="10.5" height="1.2" fill="#f4f4f4" />
<rect x="1859" y="413.97" width="10.5" height="1.2" fill="#f4f4f4" />
<rect x="1859" y="435.14" width="10.5" height="1.2" fill="#f4f4f4" />
<rect x="1859" y="456.31" width="10.5" height="1.2" fill="#f4f4f4" />
<rect x="1859" y="477.48" width="10.5" height="1.2" fill="#f4f4f4" />
<rect x="1859" y="498.65" width="10.5" height="1.2" fill="#f4f4f4" />
<rect x="1859" y="519.82" width="10.5" height="1.2" fill="#f4f4f4" />
<rect x="1859" y="540.99" width="10.5" height="1.2" fill="#f4f4f4" />
<rect x="1859" y="562.16" width="10.5" height="1.2" fill="#f4f4f4" />
<rect x="1859" y="403.4" width="4.5" height="1.2" fill="#f4f4f4" />
<rect x="1859" y="424.57" width="4.5" height="1.2" fill="#f4f4f4" />
<rect x="1859" y="445.74" width="4.5" height="1.2" fill="#f4f4f4" />
<rect x="1859" y="466.91" width="4.5" height="1.2" fill="#f4f4f4" />
<rect x="1859" y="488.08" width="4.5" height="1.2" fill="#f4f4f4" />
<rect x="1859" y="509.25" width="4.5" height="1.2" fill="#f4f4f4" />
<rect x="1859" y="530.42" width="4.5" height="1.2" fill="#f4f4f4" />
<rect x="1859" y="551.59" width="4.5" height="1.2" fill="#f4f4f4" />
<text x="1917" y="421.76" font-size="16" fill="#f4f4f4" text-anchor="end">20</text>
<text x="1917" y="442.98" font-size="16" fill="#f4f4f4" text-anchor="end">10</text>
<text x="1917" y="464.2" font-size="16" fill="#f4f4f4" text-anchor="end">0</text>
<text x="1917" y="485.42" font-size="16" fill="#f4f4f4" text-anchor="end">-10</text>
<text x="1917" y="506.64" font-size="16" fill="#f4f4f4" text-anchor="end">-20</text>
<text x="1917" y="527.86" font-size="16" fill="#f4f4f4" text-anchor="end">-30</text>
<text x="1917" y="549.08" font-size="16" fill="#f4f4f4" text-anchor="end">-40</text>
<rect x="37.5" y="567.4" width="1882.5" height="6.7" fill="#ececec" />
<rect x="37.5" y="567.4" width="1882.5" height="2" fill="#f2f2f2" />
<rect x="37.5" y="572.1" width="1882.5" height="2" fill="#eaeaea" />
<rect x="37.5" y="574.1" width="1882.5" height="26.4" fill="#dcdcdc" />
<rect x="37.5" y="598.3" width="1882.5" height="1.4" fill="#ededed" />
<rect x="37.5" y="599.7" width="1882.5" height="0.8" fill="#5e5e5e" />
<rect x="1865.8" y="575.1" width="20.5" height="15.5" rx="1" fill="#e9e9e9" stroke="#c6c6c6" stroke-width="1"/>
<path d="M1865.8,591 h20.5 M1886.6,575.8 v15" stroke="#fafafa" stroke-width="1.2" fill="none"/>
<rect x="1893.4" y="575.1" width="20.5" height="15.5" rx="1" fill="#e9e9e9" stroke="#c6c6c6" stroke-width="1"/>
<path d="M1893.4,591 h20.5 M1914.2,575.8 v15" stroke="#fafafa" stroke-width="1.2" fill="none"/>
<rect x="1871.8" y="579.8" width="8.4" height="5.8" fill="none" stroke="#757575" stroke-width="2.1"/>
<path d="M1899.5,578.8 l8,8 M1907.5,578.8 l-8,8" stroke="#757575" stroke-width="2.3"/>
<rect x="37.5" y="600.5" width="1882.5" height="340.5" fill="#000000" />
<rect x="47.35" y="687.5" width="1.3" height="13.7" fill="#8da2c1" />
<rect x="39.15" y="693.25" width="17.7" height="3.4" fill="#000" stroke="#8da2c1" stroke-width="1.3"/>
<rect x="68.35" y="681.3" width="1.3" height="28.7" fill="#8da2c1" />
<rect x="59.5" y="691.5" width="19" height="2.3" fill="#8da2c1" />
<rect x="89.35" y="684" width="1.3" height="18.5" fill="#8da2c1" />
<rect x="81.15" y="689.45" width="17.7" height="2.5" fill="#000" stroke="#8da2c1" stroke-width="1.3"/>
<rect x="110.35" y="683.6" width="1.3" height="15.3" fill="#ff6a20" />
<rect x="101.5" y="687.6" width="19" height="1.4" fill="#ff6a20" />
<rect x="131.35" y="673.9" width="1.3" height="22" fill="#ff6a20" />
<rect x="122.5" y="687.6" width="19" height="1.4" fill="#ff6a20" />
<rect x="152.35" y="731.2" width="1.3" height="38.5" fill="#ff6a20" />
<rect x="144.15" y="743.35" width="17.7" height="18.3" fill="#000" stroke="#ff6a20" stroke-width="1.3"/>
<rect x="174.35" y="741.4" width="1.3" height="47.4" fill="#ff6a20" />
<rect x="165.5" y="741.4" width="19" height="47.4" fill="#ff6a20" />
<rect x="195.35" y="765.2" width="1.3" height="29.9" fill="#8da2c1" />
<rect x="187.15" y="773.55" width="17.7" height="15.2" fill="#000" stroke="#8da2c1" stroke-width="1.3"/>
<rect x="216.35" y="747.4" width="1.3" height="36.5" fill="#ff6a20" />
<rect x="207.5" y="772.1" width="19" height="6.8" fill="#ff6a20" />
<rect x="237.35" y="763.9" width="1.3" height="27.6" fill="#8da2c1" />
<rect x="229.15" y="766.15" width="17.7" height="12.8" fill="#000" stroke="#8da2c1" stroke-width="1.3"/>
<rect x="258.35" y="752.6" width="1.3" height="26.6" fill="#ff6a20" />
<rect x="249.5" y="766.3" width="19" height="3.9" fill="#ff6a20" />
<rect x="279.35" y="735.3" width="1.3" height="37.6" fill="#8da2c1" />
<rect x="271.15" y="749.95" width="17.7" height="20.4" fill="#000" stroke="#8da2c1" stroke-width="1.3"/>
<rect x="301.35" y="727.4" width="1.3" height="31.5" fill="#8da2c1" />
<rect x="293.15" y="736.25" width="17.7" height="12.8" fill="#000" stroke="#8da2c1" stroke-width="1.3"/>
<rect x="322.35" y="720.3" width="1.3" height="23.5" fill="#8da2c1" />
<rect x="314.15" y="720.95" width="17.7" height="14.3" fill="#000" stroke="#8da2c1" stroke-width="1.3"/>
<rect x="343.35" y="705.2" width="1.3" height="57.9" fill="#ff6a20" />
<rect x="334.5" y="719.8" width="19" height="22.5" fill="#ff6a20" />
<rect x="364.35" y="735.1" width="1.3" height="26.1" fill="#8da2c1" />
<rect x="356.15" y="737.35" width="17.7" height="5.4" fill="#000" stroke="#8da2c1" stroke-width="1.3"/>
<rect x="385.35" y="716.2" width="1.3" height="32.8" fill="#ff6a20" />
<rect x="376.5" y="736.4" width="19" height="9.7" fill="#ff6a20" />
<rect x="406.35" y="746.3" width="1.3" height="33.7" fill="#ff6a20" />
<rect x="397.5" y="746.3" width="19" height="24.7" fill="#ff6a20" />
<rect x="428.35" y="763.9" width="1.3" height="15.3" fill="#8da2c1" />
<rect x="420.15" y="767.25" width="17.7" height="4.3" fill="#000" stroke="#8da2c1" stroke-width="1.3"/>
<rect x="449.35" y="754" width="1.3" height="24.9" fill="#8da2c1" />
<rect x="441.15" y="758.25" width="17.7" height="8.6" fill="#000" stroke="#8da2c1" stroke-width="1.3"/>
<rect x="470.35" y="732.4" width="1.3" height="32.6" fill="#8da2c1" />
<rect x="462.15" y="736.25" width="17.7" height="21.5" fill="#000" stroke="#8da2c1" stroke-width="1.3"/>
<rect x="491.35" y="729.3" width="1.3" height="17" fill="#ff6a20" />
<rect x="482.5" y="735.3" width="19" height="3.4" fill="#ff6a20" />
<rect x="512.35" y="738.2" width="1.3" height="20.7" fill="#ff6a20" />
<rect x="503.5" y="739" width="19" height="3.3" fill="#ff6a20" />
<rect x="533.35" y="733.7" width="1.3" height="22.6" fill="#ff6a20" />
<rect x="524.5" y="741.8" width="19" height="5.6" fill="#ff6a20" />
<rect x="555.35" y="736.2" width="1.3" height="18.3" fill="#8da2c1" />
<rect x="546.5" y="746.2" width="19" height="2.1" fill="#8da2c1" />
<rect x="576.35" y="725" width="1.3" height="25" fill="#8da2c1" />
<rect x="568.15" y="731.15" width="17.7" height="15.2" fill="#000" stroke="#8da2c1" stroke-width="1.3"/>
<rect x="597.35" y="725" width="1.3" height="33.8" fill="#ff6a20" />
<rect x="588.5" y="731.2" width="19" height="18.8" fill="#ff6a20" />
<rect x="618.35" y="747" width="1.3" height="40.5" fill="#ff6a20" />
<rect x="609.5" y="748.8" width="19" height="25" fill="#ff6a20" />
<rect x="639.35" y="753.8" width="1.3" height="28.7" fill="#8da2c1" />
<rect x="631.15" y="756.45" width="17.7" height="17.4" fill="#000" stroke="#8da2c1" stroke-width="1.3"/>
<rect x="660.35" y="732.5" width="1.3" height="28.7" fill="#8da2c1" />
<rect x="652.15" y="738.15" width="17.7" height="16.7" fill="#000" stroke="#8da2c1" stroke-width="1.3"/>
<rect x="682.35" y="735" width="1.3" height="38.8" fill="#ff6a20" />
<rect x="673.5" y="737.5" width="19" height="30" fill="#ff6a20" />
<rect x="703.35" y="651.2" width="1.3" height="28.8" fill="#8da2c1" />
<rect x="694.5" y="656.2" width="19" height="11.3" fill="#8da2c1" />
<rect x="724.35" y="667.5" width="1.3" height="56.3" fill="#ff6a20" />
<rect x="715.5" y="667.5" width="19" height="47.5" fill="#ff6a20" />
<rect x="745.35" y="705" width="1.3" height="95" fill="#ff6a20" />
<rect x="736.5" y="713.8" width="19" height="71.2" fill="#ff6a20" />
<rect x="766.35" y="762.5" width="1.3" height="41.3" fill="#8da2c1" />
<rect x="758.15" y="765.15" width="17.7" height="20.4" fill="#000" stroke="#8da2c1" stroke-width="1.3"/>
<rect x="787.35" y="754.8" width="1.3" height="65.1" fill="#ff6a20" />
<rect x="778.5" y="762.3" width="19" height="48.7" fill="#ff6a20" />
<rect x="809.35" y="799.9" width="1.3" height="42.3" fill="#ff6a20" />
<rect x="800.5" y="811.4" width="19" height="18.4" fill="#ff6a20" />
<rect x="830.35" y="813.7" width="1.3" height="25.8" fill="#8da2c1" />
<rect x="822.15" y="816.75" width="17.7" height="13.3" fill="#000" stroke="#8da2c1" stroke-width="1.3"/>
<rect x="851.35" y="808.7" width="1.3" height="29.9" fill="#ff6a20" />
<rect x="842.5" y="814.7" width="19" height="1.5" fill="#ff6a20" />
<rect x="872.35" y="807.3" width="1.3" height="42.4" fill="#ff6a20" />
<rect x="863.5" y="816.1" width="19" height="27.5" fill="#ff6a20" />
<rect x="893.35" y="809.1" width="1.3" height="38.3" fill="#8da2c1" />
<rect x="885.15" y="816.05" width="17.7" height="27.7" fill="#000" stroke="#8da2c1" stroke-width="1.3"/>
<rect x="914.35" y="772.3" width="1.3" height="46.1" fill="#8da2c1" />
<rect x="906.15" y="808.55" width="17.7" height="6.6" fill="#000" stroke="#8da2c1" stroke-width="1.3"/>
<rect x="936.35" y="800.3" width="1.3" height="23.4" fill="#ff6a20" />
<rect x="927.5" y="807.5" width="19" height="8.3" fill="#ff6a20" />
<rect x="957.35" y="807.5" width="1.3" height="23.6" fill="#8da2c1" />
<rect x="949.15" y="808.55" width="17.7" height="9.2" fill="#000" stroke="#8da2c1" stroke-width="1.3"/>
<rect x="978.35" y="804" width="1.3" height="18.8" fill="#ff6a20" />
<rect x="969.5" y="807.5" width="19" height="2.5" fill="#ff6a20" />
<rect x="999.35" y="788.6" width="1.3" height="32.3" fill="#8da2c1" />
<rect x="991.15" y="798.35" width="17.7" height="11.8" fill="#000" stroke="#8da2c1" stroke-width="1.3"/>
<rect x="1020.35" y="788.6" width="1.3" height="18.8" fill="#ff6a20" />
<rect x="1011.5" y="797.4" width="19" height="7.3" fill="#ff6a20" />
<rect x="1041.35" y="804.7" width="1.3" height="16.2" fill="#ff6a20" />
<rect x="1032.5" y="805" width="19" height="4.9" fill="#ff6a20" />
<rect x="1063.35" y="796" width="1.3" height="16.5" fill="#8da2c1" />
<rect x="1055.15" y="799.55" width="17.7" height="10.7" fill="#000" stroke="#8da2c1" stroke-width="1.3"/>
<rect x="1084.35" y="794.7" width="1.3" height="8.7" fill="#8da2c1" />
<rect x="1076.15" y="798.25" width="17.7" height="2.2" fill="#000" stroke="#8da2c1" stroke-width="1.3"/>
<polyline points="37.5,680.5 47.5,680.5 68.7,683.1 89.8,680.5 111.0,682.0 132.2,682.0 153.4,752.0 174.5,797.3 195.7,763.1 216.9,764.2 238.0,749.3 259.2,758.4 280.4,729.3 301.5,719.8 322.7,702.8 343.9,734.3 365.1,726.4 386.2,735.6 407.4,767.0 428.6,759.2 449.7,746.1 470.9,718.2 492.1,729.3 513.2,738.2 534.4,741.0 555.6,740.0 576.8,718.0 597.9,745.2 619.1,772.5 640.3,743.5 661.4,718.0 682.6,761.2 703.8,624.5 724.9,695.0 746.1,786.2 767.3,747.0 788.5,795.5 809.6,816.3 830.8,800.5 852.0,799.4 873.1,837.8 894.3,799.1 915.5,785.9 936.6,804.3 957.8,795.5 979.0,797.7 1000.2,785.5 1021.3,797.3 1042.5,804.7 1063.7,790.7" fill="none" stroke="#dc0606" stroke-width="1.1" clip-path="url(#cpC)" />
<line x1="1063.66" y1="790.7" x2="1083.83" y2="790.7" stroke="#f00000" stroke-width="2" />
<polyline points="37.5,695.9 47.5,697.0 68.7,700.6 89.8,697.8 111.0,696.5 132.2,697.8 153.4,770.2 174.5,819.3 195.7,788.3 216.9,791.9 238.0,775.7 259.2,780.4 280.4,752.9 301.5,741.9 322.7,725.8 343.9,763.1 365.1,752.9 386.2,762.3 407.4,794.3 428.6,779.6 449.7,767.0 470.9,737.9 492.1,746.6 513.2,755.6 534.4,759.5 555.6,753.8 576.8,734.2 597.9,765.0 619.1,795.5 640.3,770.0 661.4,743.8 682.6,787.0 703.8,647.5 724.9,730.0 746.1,828.0 767.3,789.5 788.5,844.8 809.6,862.9 830.8,832.8 852.0,830.4 873.1,864.1 894.3,824.6 915.5,815.4 936.6,831.2 957.8,821.0 979.0,819.3 1000.2,804.7 1021.3,816.4 1042.5,822.0 1063.7,805.4 1084.8,801.7" fill="none" stroke="#088a08" stroke-width="1.1" clip-path="url(#cpC)" />
<line x1="1063.5" y1="601" x2="1063.5" y2="888" stroke="#17c417" stroke-width="1.3" stroke-dasharray="4 3.5"/>
<path d="M1062.5,842 l9,10 h-5.500 v12.500 h-7 v-12.500 h-5.500z" fill="#079707"/>
<rect x="37.5" y="888" width="189.5" height="12" fill="url(#hG)"/>
<rect x="228" y="888" width="464" height="12" fill="url(#hR)"/>
<rect x="694" y="888" width="40" height="12" fill="url(#hG)"/>
<rect x="737" y="888" width="144" height="12" fill="url(#hR)"/>
<line x1="884" y1="890.3" x2="1105" y2="890.3" stroke="#eaea00" stroke-width="1.4" />
<path d="M124,887.500 q7,9 14,0 M126.5,887.500 q4.500,4.500 9,0" stroke="#1010e0" stroke-width="1" fill="none"/>
<path d="M451,887.500 q7,9 14,0 M453.5,887.500 q4.500,4.500 9,0" stroke="#1010e0" stroke-width="1" fill="none"/>
<path d="M700,887.500 q7,9 14,0 M702.5,887.500 q4.500,4.500 9,0" stroke="#1010e0" stroke-width="1" fill="none"/>
<path d="M798,887.500 q7,9 14,0 M800.5,887.500 q4.500,4.500 9,0" stroke="#1010e0" stroke-width="1" fill="none"/>
<path d="M985,887.500 q7,9 14,0 M987.5,887.500 q4.500,4.500 9,0" stroke="#1010e0" stroke-width="1" fill="none"/>
<rect x="1857.9" y="601" width="1.5" height="287" fill="#ffffff" />
<rect x="1859" y="602.8" width="10.5" height="1.2" fill="#fff" />
<rect x="1859" y="631.2" width="10.5" height="1.2" fill="#fff" />
<rect x="1859" y="659.6" width="10.5" height="1.2" fill="#fff" />
<rect x="1859" y="688" width="10.5" height="1.2" fill="#fff" />
<rect x="1859" y="716.4" width="10.5" height="1.2" fill="#fff" />
<rect x="1859" y="744.8" width="10.5" height="1.2" fill="#fff" />
<rect x="1859" y="773.2" width="10.5" height="1.2" fill="#fff" />
<rect x="1859" y="801.6" width="10.5" height="1.2" fill="#fff" />
<rect x="1859" y="830" width="10.5" height="1.2" fill="#fff" />
<rect x="1859" y="858.4" width="10.5" height="1.2" fill="#fff" />
<rect x="1859" y="617" width="4.5" height="1.2" fill="#fff" />
<rect x="1859" y="645.4" width="4.5" height="1.2" fill="#fff" />
<rect x="1859" y="673.8" width="4.5" height="1.2" fill="#fff" />
<rect x="1859" y="702.2" width="4.5" height="1.2" fill="#fff" />
<rect x="1859" y="730.6" width="4.5" height="1.2" fill="#fff" />
<rect x="1859" y="759" width="4.5" height="1.2" fill="#fff" />
<rect x="1859" y="787.4" width="4.5" height="1.2" fill="#fff" />
<rect x="1859" y="815.8" width="4.5" height="1.2" fill="#fff" />
<rect x="1859" y="844.2" width="4.5" height="1.2" fill="#fff" />
<rect x="1859" y="872.6" width="4.5" height="1.2" fill="#fff" />
<text x="1917" y="639.1" font-size="16" fill="#ffffff" text-anchor="end">391</text>
<text x="1917" y="667.45" font-size="16" fill="#ffffff" text-anchor="end">390</text>
<text x="1917" y="695.8" font-size="16" fill="#ffffff" text-anchor="end">389</text>
<text x="1917" y="724.15" font-size="16" fill="#ffffff" text-anchor="end">388</text>
<text x="1917" y="752.5" font-size="16" fill="#ffffff" text-anchor="end">387</text>
<text x="1917" y="780.85" font-size="16" fill="#ffffff" text-anchor="end">386</text>
<text x="1917" y="837.55" font-size="16" fill="#ffffff" text-anchor="end">384</text>
<text x="1917" y="865.9" font-size="16" fill="#ffffff" text-anchor="end">383</text>
<rect x="1863.500" y="787.500" width="60" height="20.500" fill="#000" stroke="#fff" stroke-width="1.200"/>
<text x="1866" y="802.500" font-size="13.700" fill="#00dc00">385.1401</text>
<rect x="37.5" y="900.1" width="1822.5" height="1.3" fill="#ffffff" />
<rect x="37.5" y="919.7" width="1822.5" height="1.3" fill="#ffffff" />
<rect x="47.45" y="900" width="1.3" height="20" fill="#ffffff" />
<text x="50.6" y="915.700" font-size="15.200" fill="#ffffff">15h</text>
<rect x="132.13" y="900" width="1.3" height="20" fill="#ffffff" />
<text x="135.28" y="915.700" font-size="15.200" fill="#ffffff">16h</text>
<rect x="174.47" y="900" width="1.3" height="20" fill="#ffffff" />
<text x="177.62" y="915.700" font-size="15.200" fill="#ffffff">10h</text>
<rect x="259.15" y="900" width="1.3" height="20" fill="#ffffff" />
<text x="262.3" y="915.700" font-size="15.200" fill="#ffffff">11h</text>
<rect x="343.83" y="900" width="1.3" height="20" fill="#ffffff" />
<text x="346.98" y="915.700" font-size="15.200" fill="#ffffff">12h</text>
<rect x="428.51" y="900" width="1.3" height="20" fill="#ffffff" />
<text x="431.66" y="915.700" font-size="15.200" fill="#ffffff">13h</text>
<rect x="513.19" y="900" width="1.3" height="20" fill="#ffffff" />
<text x="516.34" y="915.700" font-size="15.200" fill="#ffffff">14h</text>
<rect x="597.87" y="900" width="1.3" height="20" fill="#ffffff" />
<text x="601.02" y="915.700" font-size="15.200" fill="#ffffff">15h</text>
<rect x="682.55" y="900" width="1.3" height="20" fill="#ffffff" />
<text x="685.7" y="915.700" font-size="15.200" fill="#ffffff">16h</text>
<rect x="724.89" y="900" width="1.3" height="20" fill="#ffffff" />
<text x="728.04" y="915.700" font-size="15.200" fill="#ffffff">10h</text>
<rect x="809.57" y="900" width="1.3" height="20" fill="#ffffff" />
<text x="812.72" y="915.700" font-size="15.200" fill="#ffffff">11h</text>
<rect x="894.25" y="900" width="1.3" height="20" fill="#ffffff" />
<text x="897.4" y="915.700" font-size="15.200" fill="#ffffff">12h</text>
<rect x="978.93" y="900" width="1.3" height="20" fill="#ffffff" />
<text x="982.08" y="915.700" font-size="15.200" fill="#ffffff">13h</text>
<rect x="1063.61" y="900" width="1.3" height="20" fill="#ffffff" />
<text x="1066.76" y="915.700" font-size="15.200" fill="#ffffff">14h</text>
<rect x="1148.29" y="900" width="1.3" height="20" fill="#ffffff" />
<text x="1151.44" y="915.700" font-size="15.200" fill="#ffffff">15h</text>
<rect x="1232.97" y="900" width="1.3" height="20" fill="#ffffff" />
<text x="1236.12" y="915.700" font-size="15.200" fill="#ffffff">16h</text>
<rect x="1317.65" y="900" width="1.3" height="20" fill="#ffffff" />
<text x="1320.8" y="915.700" font-size="15.200" fill="#ffffff">17h</text>
<rect x="1402.33" y="900" width="1.3" height="20" fill="#ffffff" />
<text x="1405.48" y="915.700" font-size="15.200" fill="#ffffff">18h</text>
<rect x="1487.01" y="900" width="1.3" height="20" fill="#ffffff" />
<text x="1490.16" y="915.700" font-size="15.200" fill="#ffffff">19h</text>
<rect x="1571.69" y="900" width="1.3" height="20" fill="#ffffff" />
<text x="1574.84" y="915.700" font-size="15.200" fill="#ffffff">20h</text>
<rect x="1656.37" y="900" width="1.3" height="20" fill="#ffffff" />
<text x="1659.52" y="915.700" font-size="15.200" fill="#ffffff">21h</text>
<rect x="1741.05" y="900" width="1.3" height="20" fill="#ffffff" />
<text x="1744.2" y="915.700" font-size="15.200" fill="#ffffff">22h</text>
<rect x="1825.73" y="900" width="1.3" height="20" fill="#ffffff" />
<text x="1828.88" y="915.700" font-size="15.200" fill="#ffffff">23h</text>
<rect x="153.3" y="921" width="1.3" height="19.5" fill="#ffffff" />
<text x="156.15" y="935.500" font-size="15.200" fill="#ffffff">31</text>
<rect x="703.72" y="921" width="1.3" height="19.5" fill="#ffffff" />
<text x="706.57" y="935.500" font-size="15.200" fill="#ffffff">November</text>
<rect x="1860" y="900" width="61" height="41" fill="#f0f0f0" />
<circle cx="1888" cy="919" r="9.5" fill="none" stroke="#222" stroke-width="1.5"/>
<circle cx="1884.500" cy="916" r="1.300" fill="#222"/><circle cx="1891.500" cy="916" r="1.300" fill="#222"/>
<path d="M1883.500,923 h9" stroke="#222" stroke-width="1.400"/>
<rect x="37.5" y="940.5" width="1822.5" height="1.5" fill="#6a6a6a" />
<rect x="37.5" y="942" width="1882.5" height="28" fill="#f0f0f0" />
<rect x="1459" y="952" width="186.5" height="7" fill="#858585" />
<rect x="1668.8" y="944.5" width="1.4" height="19.5" fill="#6e6e6e" />
<rect x="1729.3" y="944.5" width="1.4" height="19.5" fill="#6e6e6e" />
<rect x="1841.8" y="944.5" width="1.4" height="19.5" fill="#6e6e6e" />
<g transform="translate(1686.500,955.300) scale(1.220) translate(-1686.500,-955.500)">
<path d="M1680.500,955 a6,6 0 0 1 10.500,-3.800 l1.800,-1.800 v5.600 h-5.600 l1.900,-1.900 a3.400,3.400 0 0 0 -5.800,1.900z" fill="#4c4c4c"/>
<path d="M1692.500,956 a6,6 0 0 1 -10.500,3.800 l-1.800,1.800 v-5.600 h5.600 l-1.900,1.900 a3.400,3.400 0 0 0 5.800,-1.900z" fill="#4c4c4c"/>
</g>
<rect x="1704.500" y="946.500" width="17" height="17" rx="1.500" fill="#eaeaea"/>
<text x="1713.300" y="960.500" font-size="14" font-weight="bold" fill="#4c4c4c" text-anchor="middle">C</text>
<rect x="1738.500" y="946.500" width="17" height="17" rx="1.500" fill="#eaeaea"/>
<path d="M1746.600,947.500 l4,5 h-2.800 v5.500 h2.800 l-4,5 l-4,-5 h2.800 v-5.500 h-2.800z" fill="#4c4c4c"/>
<path d="M1773,946.500 l3.600,4 h-2.400 v3.500 h3.500 v-2.400 l4,3.600 l-4,3.600 v-2.400 h-3.500 v3.500 h2.400 l-3.600,4 l-3.600,-4 h2.400 v-3.500 h-3.500 v2.400 l-4,-3.600 l4,-3.600 v2.400 h3.500 v-3.500 h-2.400z" fill="#4c4c4c"/>
<circle cx="1799" cy="955.200" r="6.700" fill="none" stroke="#4c4c4c" stroke-width="1.400"/><path d="M1795.500,955.200 h7" stroke="#4c4c4c" stroke-width="2.400"/>
<circle cx="1825.300" cy="955.200" r="6.700" fill="none" stroke="#4c4c4c" stroke-width="1.400"/><path d="M1821.800,955.200 h7 M1825.300,951.700 v7" stroke="#4c4c4c" stroke-width="2.400"/>
<path d="M1862.400,949.500 v11.500 l-7.400,-5.700z M1882.700,949.500 v11.500 l7.200,-5.700z" fill="#c6c6c6"/>
<rect x="1903.500" y="949" width="14" height="13" fill="#f4f4f4" stroke="#4c4c4c" stroke-width="1.300"/>
<path d="M1903.500,952.200 h14 M1906,955 h9.500 M1906,957.500 h9.500 M1906,960 h9.500" stroke="#4c4c4c" stroke-width="1.100"/>
<rect x="0" y="969.3" width="37" height="1.3" fill="#8a8a8a" />
<rect x="37" y="970.3" width="1883" height="1" fill="#fbfbfb" />
<rect x="0" y="971.3" width="1920" height="40" fill="#eaeaea" />
<rect x="704" y="973" width="1216" height="37" fill="#e9e9e9" />
<rect x="0" y="1010.5" width="1920" height="1.5" fill="#ffffff" />
<rect x="1" y="974" width="6.500" height="36" fill="url(#gGrip)"/>
<rect x="2.8" y="990.5" width="3" height="3" fill="#505050" />
<rect x="10.5" y="980" width="161" height="24.500" rx="2.500" fill="#ffffff" stroke="#a2a2a2" stroke-width="1.300"/>
<line x1="30" y1="992.8" x2="131" y2="992.8" stroke="#222" stroke-width="1.3" />
<path d="M156,990 l5,5 l5,-5" stroke="#444" stroke-width="1.300" fill="none"/>
<rect x="181" y="980" width="123.5" height="24.500" rx="2.500" fill="#ffffff" stroke="#a2a2a2" stroke-width="1.300"/>
<line x1="195" y1="992.8" x2="268.5" y2="992.8" stroke="#222" stroke-width="1.3" />
<path d="M288.5,990 l5,5 l5,-5" stroke="#444" stroke-width="1.300" fill="none"/>
<rect x="175" y="978" width="1" height="28" fill="#a6a6a6" />
<rect x="176" y="978" width="1" height="28" fill="#ffffff" />
<rect x="313" y="973" width="1" height="37" fill="#a6a6a6" />
<rect x="314" y="973" width="1" height="37" fill="#ffffff" />
<rect x="322" y="974" width="6.500" height="36" fill="url(#gGrip)"/>
<rect x="323.8" y="990.5" width="3" height="3" fill="#505050" />
<rect x="331" y="976" width="134" height="34" fill="#f0f0f0" />
<rect x="334.8" y="979.5" width="12" height="12.5" fill="#0000ff" stroke="#a8a8a8" stroke-width="0.8"/>
<rect x="334.8" y="994.5" width="12" height="12.5" fill="#ffc800" stroke="#a8a8a8" stroke-width="0.8"/>
<rect x="349.55" y="979.5" width="12" height="12.5" fill="#ff0000" stroke="#a8a8a8" stroke-width="0.8"/>
<rect x="349.55" y="994.5" width="12" height="12.5" fill="#ffff00" stroke="#a8a8a8" stroke-width="0.8"/>
<rect x="364.3" y="979.5" width="12" height="12.5" fill="#afeeee" stroke="#a8a8a8" stroke-width="0.8"/>
<rect x="364.3" y="994.5" width="12" height="12.5" fill="#696969" stroke="#a8a8a8" stroke-width="0.8"/>
<rect x="379.05" y="979.5" width="12" height="12.5" fill="#7fffd4" stroke="#a8a8a8" stroke-width="0.8"/>
<rect x="379.05" y="994.5" width="12" height="12.5" fill="#28c828" stroke="#a8a8a8" stroke-width="0.8"/>
<rect x="393.8" y="979.5" width="12" height="12.5" fill="#7b7bc8" stroke="#a8a8a8" stroke-width="0.8"/>
<rect x="393.8" y="994.5" width="12" height="12.5" fill="#ffffdc" stroke="#a8a8a8" stroke-width="0.8"/>
<rect x="408.55" y="979.5" width="12" height="12.5" fill="#ffa54f" stroke="#a8a8a8" stroke-width="0.8"/>
<rect x="408.55" y="994.5" width="12" height="12.5" fill="#ff6a20" stroke="#a8a8a8" stroke-width="0.8"/>
<rect x="423.3" y="979.5" width="12" height="12.5" fill="#ffc0cb" stroke="#a8a8a8" stroke-width="0.8"/>
<rect x="423.3" y="994.5" width="12" height="12.5" fill="#90ee90" stroke="#a8a8a8" stroke-width="0.8"/>
<rect x="438.05" y="979.5" width="12" height="12.5" fill="#e6e6fa" stroke="#a8a8a8" stroke-width="0.8"/>
<rect x="438.05" y="994.5" width="12" height="12.5" fill="#8b0000" stroke="#a8a8a8" stroke-width="0.8"/>
<rect x="348.500" y="978.500" width="14" height="14.500" fill="none" stroke="#c05050" stroke-width="1" stroke-dasharray="1.500 1"/>
<path d="M454.500,991.500 h7 l-3.500,3.800z" fill="#111"/>
<rect x="474" y="973" width="1" height="37" fill="#a6a6a6" />
<rect x="475" y="973" width="1" height="37" fill="#ffffff" />
<rect x="484" y="974" width="6.500" height="36" fill="url(#gGrip)"/>
<rect x="485.8" y="990.5" width="3" height="3" fill="#505050" />
<rect x="498.7" y="986.500" width="20" height="14.500" rx="1" fill="#ffffff" stroke="#9ab0c8" stroke-width="1.300"/>
<path d="M498.7,987.300 h20" stroke="#a8c0dc" stroke-width="2"/>
<path d="M501.2,997 l4,-3.500 l2.500,1.500" stroke="#e02020" stroke-width="1.400" fill="none"/>
<text x="513" y="999.500" font-size="14" font-weight="bold" style="font-family:&quot;Liberation Serif&quot;,serif" fill="#222" text-anchor="middle">1</text>
<rect x="532.45" y="986.500" width="20" height="14.500" rx="1" fill="#ffffff" stroke="#9ab0c8" stroke-width="1.300"/>
<path d="M532.45,987.300 h20" stroke="#a8c0dc" stroke-width="2"/>
<path d="M534.95,997 l4,-3.500 l2.500,1.500" stroke="#e02020" stroke-width="1.400" fill="none"/>
<text x="546.75" y="999.500" font-size="14" font-weight="bold" style="font-family:&quot;Liberation Serif&quot;,serif" fill="#222" text-anchor="middle">2</text>
<rect x="566.2" y="986.500" width="20" height="14.500" rx="1" fill="#ffffff" stroke="#9ab0c8" stroke-width="1.300"/>
<path d="M566.2,987.300 h20" stroke="#a8c0dc" stroke-width="2"/>
<path d="M568.7,997 l4,-3.500 l2.500,1.500" stroke="#e02020" stroke-width="1.400" fill="none"/>
<text x="580.5" y="999.500" font-size="14" font-weight="bold" style="font-family:&quot;Liberation Serif&quot;,serif" fill="#222" text-anchor="middle">3</text>
<rect x="599.95" y="986.500" width="20" height="14.500" rx="1" fill="#ffffff" stroke="#9ab0c8" stroke-width="1.300"/>
<path d="M599.95,987.300 h20" stroke="#a8c0dc" stroke-width="2"/>
<path d="M602.45,997 l4,-3.500 l2.500,1.500" stroke="#e02020" stroke-width="1.400" fill="none"/>
<text x="614.25" y="999.500" font-size="14" font-weight="bold" style="font-family:&quot;Liberation Serif&quot;,serif" fill="#222" text-anchor="middle">4</text>
<rect x="633.7" y="986.500" width="20" height="14.500" rx="1" fill="#ffffff" stroke="#9ab0c8" stroke-width="1.300"/>
<path d="M633.7,987.300 h20" stroke="#a8c0dc" stroke-width="2"/>
<path d="M636.2,997 l4,-3.500 l2.500,1.500" stroke="#e02020" stroke-width="1.400" fill="none"/>
<text x="648" y="999.500" font-size="14" font-weight="bold" style="font-family:&quot;Liberation Serif&quot;,serif" fill="#222" text-anchor="middle">5</text>
<rect x="667.45" y="986.500" width="20" height="14.500" rx="1" fill="#ffffff" stroke="#9ab0c8" stroke-width="1.300"/>
<path d="M667.45,987.300 h20" stroke="#a8c0dc" stroke-width="2"/>
<path d="M669.95,997 l4,-3.500 l2.500,1.500" stroke="#e02020" stroke-width="1.400" fill="none"/>
<text x="681.75" y="999.500" font-size="14" font-weight="bold" style="font-family:&quot;Liberation Serif&quot;,serif" fill="#222" text-anchor="middle">6</text>
<rect x="703" y="973" width="1" height="37" fill="#a6a6a6" />
<rect x="704" y="973" width="1" height="37" fill="#ffffff" />
<rect x="0" y="1012" width="1920" height="8" fill="#424242" />
<rect x="0" y="1013" width="1920" height="67" fill="#211e26" />
<rect x="0" y="1013" width="1920" height="6.8" fill="#424242" />
<linearGradient id="gWx" x1="0" y1="0" x2="1" y2="1"><stop offset="0" stop-color="#c6cad2"/><stop offset="1" stop-color="#84888f"/></linearGradient>
<circle cx="36" cy="1050" r="13.100" fill="url(#gWx)"/>
<path d="M38.500,1059.300 a4.200,4.200 0 0 1 0.300,-8.300 a5,5 0 0 1 9.300,1.300 a3.600,3.600 0 0 1 -0.300,7z" fill="#f0f1f4"/>
<rect x="506" y="1036" width="13.200" height="13.200" rx="1" fill="#36b6f2"/>
<rect x="520.8" y="1036" width="13.200" height="13.200" rx="1" fill="#36b6f2"/>
<rect x="506" y="1050.8" width="13.200" height="13.200" rx="1" fill="#36b6f2"/>
<rect x="520.8" y="1050.8" width="13.200" height="13.200" rx="1" fill="#36b6f2"/>
<circle cx="578.500" cy="1047" r="10" fill="#48464e" stroke="#f0f0f0" stroke-width="3"/>
<path d="M571.500,1054.500 l-7.500,8.500" stroke="#f4f4f4" stroke-width="4" stroke-linecap="round"/>
<circle cx="630" cy="1049" r="14" fill="#7b83eb"/><path d="M618,1058 l-1.500,7 l8,-3z" fill="#7b83eb"/>
<rect x="622" y="1043.500" width="11.500" height="10.500" rx="2" fill="#fff"/><path d="M634.500,1047.500 l5,-3 v9 l-5,-3z" fill="#fff"/>
<rect x="683" y="1036.500" width="17" height="27" rx="1.500" fill="#fdfdfd" stroke="#2b579a" stroke-width="0.800"/>
<path d="M690,1043 h8 M690,1048 h8 M690,1053 h8 M690,1058 h8" stroke="#2b579a" stroke-width="1.800"/>
<path d="M671,1037 l19,-3.500 v33 l-19,-3.500z" fill="#2b579a"/>
<text x="680.5" y="1056" font-size="15" font-weight="bold" fill="#fff" text-anchor="middle">W</text>
<rect x="725.5" y="1036" width="29" height="28.500" rx="2.500" fill="url(#gMs)" stroke="#2a2a2a" stroke-width="1"/>
<path d="M732.5,1062.500 l1.800,-11 h3.300 l-1.300,11z" fill="#f08a24"/>
<path d="M738.1,1062.500 l1.800,-18 h3.300 l-1.300,18z" fill="#f08a24"/>
<path d="M743.7,1062.500 l1.800,-25 h3.300 l-1.300,25z" fill="#f08a24"/>
<path d="M780,1039 h10 l3,3.500 h17 v20 h-30z" fill="#f6b73c"/>
<path d="M780,1046 h30 v17.500 h-30z" fill="#fdd663"/>
<rect x="787" y="1056.500" width="16" height="7" fill="#2f88d8"/>
<path d="M850,1050 L837.01,1042.5 A15,15 0 0 1 862.99,1042.5 Z" fill="#e33b2e"/>
<path d="M850,1050 L862.99,1042.5 A15,15 0 0 1 850,1065 Z" fill="#fbc116"/>
<path d="M850,1050 L850,1065 A15,15 0 0 1 837.01,1042.5 Z" fill="#2da94f"/>
<circle cx="850" cy="1050" r="7.05" fill="#fff"/><circle cx="850" cy="1050" r="5.4" fill="#4285f4"/>
<circle cx="862" cy="1039.500" r="8.500" fill="#8ab4f8" stroke="#211e26" stroke-width="1"/>
<circle cx="862" cy="1037" r="2.800" fill="#1f3a6e"/><path d="M856.500,1044 q5.500,-6 11,0z" fill="#1f3a6e"/>
<rect x="903" y="1036.500" width="17" height="27" rx="1.500" fill="#fdfdfd" stroke="#d24726" stroke-width="0.800"/>
<path d="M910,1043 h8 M910,1048 h8 M910,1053 h8 M910,1058 h8" stroke="#d24726" stroke-width="1.800"/>
<path d="M891,1037 l19,-3.500 v33 l-19,-3.500z" fill="#d24726"/>
<text x="900.5" y="1056" font-size="15" font-weight="bold" fill="#fff" text-anchor="middle">P</text>
<path d="M960,1036 l8.500,21 h-17z" fill="#f48b00"/>
<path d="M956.500,1045 h7 l2,5 h-11z" fill="#fff"/>
<path d="M950,1057 h20 l3,6.500 h-26z" fill="#f48b00"/>
<circle cx="1015" cy="1050" r="15" fill="#1b8ad6"/>
<path d="M1001,1054 a14.500,14.500 0 0 1 28,-9 q-8,-7 -17,-2 q-8,5 -11,11z" fill="#37c6a8"/>
<path d="M1009,1056 a7,7 0 0 1 14,-4 q1,3 -3,3.500 h-7 q0,5 7,6 q-7,3 -11,-5.500z" fill="#211e26" opacity=".55"/>
<circle cx="1016" cy="1051" r="4.500" fill="#211e26" opacity=".0"/>
<rect x="1068" y="1036.500" width="17" height="27" rx="1.500" fill="#fdfdfd" stroke="#3955a3" stroke-width="0.800"/>
<path d="M1075,1043 h8 M1075,1048 h8 M1075,1053 h8 M1075,1058 h8" stroke="#3955a3" stroke-width="1.800"/>
<path d="M1056,1037 l19,-3.500 v33 l-19,-3.500z" fill="#3955a3"/>
<text x="1065.5" y="1056" font-size="15" font-weight="bold" fill="#fff" text-anchor="middle">V</text>
<rect x="1123" y="1036.500" width="17" height="27" rx="1.500" fill="#fdfdfd" stroke="#217346" stroke-width="0.800"/>
<path d="M1130,1043 h8 M1130,1048 h8 M1130,1053 h8 M1130,1058 h8" stroke="#217346" stroke-width="1.800"/>
<path d="M1111,1037 l19,-3.500 v33 l-19,-3.500z" fill="#217346"/>
<text x="1120.5" y="1056" font-size="15" font-weight="bold" fill="#fff" text-anchor="middle">X</text>
<path d="M1180,1050 L1167.01,1042.5 A15,15 0 0 1 1192.99,1042.5 Z" fill="#e33b2e"/>
<path d="M1180,1050 L1192.99,1042.5 A15,15 0 0 1 1180,1065 Z" fill="#fbc116"/>
<path d="M1180,1050 L1180,1065 A15,15 0 0 1 1167.01,1042.5 Z" fill="#2da94f"/>
<circle cx="1180" cy="1050" r="7.05" fill="#fff"/><circle cx="1180" cy="1050" r="5.4" fill="#4285f4"/>
<rect x="1224.500" y="1036" width="21" height="28.500" rx="2" fill="#8a9bb0" stroke="#5a6a80" stroke-width="1"/>
<rect x="1227" y="1039" width="16" height="6" fill="#35b8f0"/>
<rect x="1227" y="1047.5" width="4.2" height="4" fill="#e8ecf2" />
<rect x="1232.6" y="1047.5" width="4.2" height="4" fill="#e8ecf2" />
<rect x="1238.2" y="1047.5" width="4.2" height="4" fill="#e8ecf2" />
<rect x="1227" y="1052.9" width="4.2" height="4" fill="#e8ecf2" />
<rect x="1232.6" y="1052.9" width="4.2" height="4" fill="#e8ecf2" />
<rect x="1238.2" y="1052.9" width="4.2" height="4" fill="#e8ecf2" />
<rect x="1227" y="1058.3" width="4.2" height="4" fill="#e8ecf2" />
<rect x="1232.6" y="1058.3" width="4.2" height="4" fill="#e8ecf2" />
<rect x="1238.2" y="1058.3" width="4.2" height="4" fill="#e8ecf2" />
<rect x="1275" y="1035" width="30" height="30" fill="#0f8a8a"/>
<path d="M1281,1062 h18 l-1.500,-5 h-15z M1282,1056 q-5,-9 3,-10 q2,0 5,4 q3,-4 5,-4 q8,1 3,10z" fill="#fff"/>
<path d="M1290,1038 v8 M1287,1041 h6" stroke="#fff" stroke-width="1.800"/>
<rect x="1331.500" y="1035.500" width="29" height="29" rx="4" fill="#211e26" stroke="#7e1a2a" stroke-width="1.300"/>
<text x="1346" y="1059" font-size="14.500" fill="#b3203a" text-anchor="middle">Pro</text>
<path d="M1350,1041.500 h5 M1337,1044 h3" stroke="#b3203a" stroke-width="1.400"/>
<rect x="1376.500" y="1025.500" width="48" height="50" rx="4" fill="#2e2b33" stroke="#3a3740" stroke-width="1"/>
<rect x="1386" y="1036" width="29" height="28.500" rx="2.500" fill="url(#gMs)" stroke="#2a2a2a" stroke-width="1"/>
<path d="M1393,1062.500 l1.800,-11 h3.300 l-1.300,11z" fill="#f08a24"/>
<path d="M1398.6,1062.500 l1.800,-18 h3.300 l-1.300,18z" fill="#f08a24"/>
<path d="M1404.2,1062.500 l1.800,-25 h3.300 l-1.300,25z" fill="#f08a24"/>
<rect x="1391" y="1071" width="19.500" height="3.300" rx="1.600" fill="#4cc2ff"/>
<rect x="681.3" y="1071.500" width="7.500" height="3" rx="1.500" fill="#9a9a9e"/>
<rect x="847.3" y="1071.500" width="7.500" height="3" rx="1.500" fill="#9a9a9e"/>
<rect x="1121.3" y="1071.500" width="7.500" height="3" rx="1.500" fill="#9a9a9e"/>
<rect x="1231.3" y="1071.500" width="7.500" height="3" rx="1.500" fill="#9a9a9e"/>
<rect x="1341.3" y="1071.500" width="7.500" height="3" rx="1.500" fill="#9a9a9e"/>
<path d="M1693.500,1054 l7.500,-7.500 l7.500,7.500" stroke="#f2f2f2" stroke-width="1.500" fill="none"/>
<path d="M1726,1046.500 a14.500,14.500 0 0 1 20,0 M1729,1050 a10,10 0 0 1 14,0 M1732,1053.500 a5.500,5.500 0 0 1 8,0" stroke="#f6f6f6" stroke-width="2" fill="none"/><circle cx="1736" cy="1056.500" r="1.700" fill="#f2f2f2"/>
<path d="M1756.500,1047.500 h3 l4.500,-4 v14 l-4.500,-4 h-3z" fill="none" stroke="#f2f2f2" stroke-width="1.400" stroke-linejoin="round"/>
<path d="M1767,1046.500 a5,5 0 0 1 0,8 M1769.500,1043.500 a9,9 0 0 1 0,14" stroke="#f2f2f2" stroke-width="1.300" fill="none"/>
<rect x="1789.500" y="1044.500" width="14" height="11" rx="2" fill="none" stroke="#f2f2f2" stroke-width="1.400"/><rect x="1804" y="1047.500" width="2" height="5" fill="#f2f2f2"/>
<rect x="1791.500" y="1046.500" width="5" height="7" fill="#f2f2f2"/>
<path d="M1784.500,1044 v14" stroke="#221f26" stroke-width="9"/>
<rect x="1786.200" y="1041.300" width="1.600" height="4.500" fill="#f4f4f4"/><rect x="1790" y="1041.300" width="1.600" height="4.500" fill="#f4f4f4"/>
<path d="M1784.800,1045.300 h8.200 v3 q0,3 -3,3.600 v4.600 h-2.200 v-4.600 q-3,-0.600 -3,-3.600z" fill="#f4f4f4"/>
</svg>
<div id="t1" class="t" style="left:13px;top:5.33255px;font-size:19.3px;color:#ffffff;letter-spacing:-0.233px;">MetaStock</div>
<div id="t2" class="t" style="left:720px;top:8.6025px;font-size:15px;color:#ffffff;letter-spacing:-0.143px;">[SPY Nova Maquineta 15M.mwc</div>
<div id="t3" class="t" style="left:937.3px;top:8.6025px;font-size:15px;color:#ffffff;letter-spacing:-0.100px;">-</div>
<div id="t4" class="t" style="left:947px;top:8.6025px;font-size:15px;color:#ffffff;letter-spacing:-0.648px;">[SPY] SPDR S&amp;P 500 (Trade Price)]</div>
<div id="t5" class="t" style="left:1181.1px;top:8.6025px;font-size:15px;color:#ffffff;letter-spacing:-0.564px;">385.140 (+0.05011)</div>
<div id="t6" class="t" style="left:1752px;top:8.6025px;font-size:15px;color:#ffffff;letter-spacing:0.014px;">15 Minute</div>
<div id="t7" class="t" style="left:10px;top:42.3px;font-size:15px;color:#1a1a1a;letter-spacing:-1.297px;"><u>F</u>ile</div>
<div id="t8" class="t" style="left:46px;top:42.3px;font-size:15px;color:#1a1a1a;letter-spacing:-0.715px;"><u>E</u>dit</div>
<div id="t9" class="t" style="left:85px;top:42.3px;font-size:15px;color:#1a1a1a;letter-spacing:-0.312px;"><u>V</u>iew</div>
<div id="t10" class="t" style="left:132px;top:42.3px;font-size:15px;color:#1a1a1a;letter-spacing:-0.589px;"><u>I</u>nsert</div>
<div id="t11" class="t" style="left:182px;top:42.3px;font-size:15px;color:#1a1a1a;letter-spacing:-1.089px;">Fo<u>r</u>mat</div>
<div id="t12" class="t" style="left:240px;top:42.3px;font-size:15px;color:#1a1a1a;letter-spacing:-0.406px;"><u>T</u>ools</div>
<div id="t13" class="t" style="left:289px;top:42.3px;font-size:15px;color:#1a1a1a;letter-spacing:-0.562px;"><u>W</u>indow</div>
<div id="t14" class="t" style="left:356px;top:42.3px;font-size:15px;color:#1a1a1a;letter-spacing:-0.719px;"><u>H</u>elp</div>
<div id="t15" class="t" style="left:497px;top:77.5px;font-size:14.5px;color:#111;letter-spacing:-0.664px;">MB 002</div>
<div id="t16" class="t" style="left:68.3px;top:108.502px;font-size:15px;color:#46464e;letter-spacing:-0.088px;">Nova Maquineta Tendência (</div>
<div id="t17" class="t" style="left:258.3px;top:108.502px;font-size:15px;color:#35c335;letter-spacing:-1.192px;">0.0000,</div>
<div id="t18" class="t" style="left:306.7px;top:108.502px;font-size:15px;color:#e81010;letter-spacing:-1.064px;">0.0000,</div>
<div id="t19" class="t" style="left:355px;top:108.502px;font-size:15px;color:#f6f000;letter-spacing:-0.815px;">0.0000</div>
<div id="t20" class="t" style="left:399.3px;top:108.502px;font-size:15px;color:#46464e;letter-spacing:-0.300px;">)</div>
<div id="t21" class="t" style="left:68.3px;top:204.102px;font-size:15px;color:#46464e;letter-spacing:0.002px;">Maquineta Tendência Alt (</div>
<div id="t22" class="t" style="left:241.7px;top:204.102px;font-size:15px;color:#f2c322;letter-spacing:-0.821px;">-1.82002,</div>
<div id="t23" class="t" style="left:304px;top:204.102px;font-size:15px;color:#35c335;letter-spacing:-1.011px;">0.54775,</div>
<div id="t24" class="t" style="left:361px;top:204.102px;font-size:15px;color:#e81010;letter-spacing:-0.855px;">-5.47145,</div>
<div id="t25" class="t" style="left:423.3px;top:204.102px;font-size:15px;color:#f0743a;letter-spacing:-0.855px;">-6.74372,</div>
<div id="t26" class="t" style="left:485.7px;top:204.102px;font-size:15px;color:#faf6dc;letter-spacing:-1.011px;">22.0842,</div>
<div id="t27" class="t" style="left:541.7px;top:204.102px;font-size:15px;color:#faf6dc;letter-spacing:-0.755px;">-22.0842,</div>
<div id="t28" class="t" style="left:605px;top:204.102px;font-size:15px;color:#9fd2e8;letter-spacing:-0.926px;">-1,500.00,</div>
<div id="t29" class="t" style="left:670.7px;top:204.102px;font-size:15px;color:#9fd2e8;letter-spacing:-1.433px;">0.0,</div>
<div id="t30" class="t" style="left:697.3px;top:204.102px;font-size:15px;color:#9fd2e8;letter-spacing:-1.053px;">0.0</div>
<div id="t31" class="t" style="left:719px;top:204.102px;font-size:15px;color:#46464e;letter-spacing:-0.700px;">)</div>
<div id="t32" class="t" style="left:68.3px;top:362.002px;font-size:15px;color:#46464e;letter-spacing:-0.121px;">Maquineta Oscilação (</div>
<div id="t33" class="t" style="left:216px;top:362.002px;font-size:15px;color:#f6f000;letter-spacing:-0.788px;">-4.00000,</div>
<div id="t34" class="t" style="left:278.3px;top:362.002px;font-size:15px;color:#f6f2d0;letter-spacing:-0.743px;">-0.72954,</div>
<div id="t35" class="t" style="left:340px;top:362.002px;font-size:15px;color:#101010;letter-spacing:-0.836px;">0.000,</div>
<div id="t36" class="t" style="left:381.7px;top:362.002px;font-size:15px;color:#8b0000;letter-spacing:-0.948px;">25.0000</div>
<div id="t37" class="t" style="left:433.3px;top:362.002px;font-size:15px;color:#46464e;letter-spacing:0.000px;">)</div>
<div id="t38" class="t" style="left:68.3px;top:574.303px;font-size:15px;color:#46464e;letter-spacing:-1.007px;">SPDR S&amp;P 500</div>
<div id="t39" class="t" style="left:165.5px;top:574.303px;font-size:15px;color:#8ea9c9;letter-spacing:-0.632px;">(385.080, 385.240, 384.940, 385.140, +0.05011)</div>
<div id="t40" class="t" style="left:458.5px;top:574.303px;font-size:15px;color:#46464e;letter-spacing:-0.537px;">, Forecast Prices (</div>
<div id="t41" class="t" style="left:570.7px;top:574.303px;font-size:15px;color:#e81010;letter-spacing:-0.924px;">385.407,</div>
<div id="t42" class="t" style="left:628.3px;top:574.303px;font-size:15px;color:#2fa83a;letter-spacing:-0.748px;">385.010</div>
<div id="t43" class="t" style="left:681.7px;top:574.303px;font-size:15px;color:#46464e;letter-spacing:-0.700px;">)</div>
<div id="t44" class="t" style="left:1862.5px;top:1032.74px;font-size:13.8px;color:#ffffff;letter-spacing:-0.406px;">18:02</div>
<div id="t45" class="t" style="left:1826.3px;top:1052.74px;font-size:13.8px;color:#ffffff;letter-spacing:0.067px;">01/11/2022</div>
</div></body></html>
